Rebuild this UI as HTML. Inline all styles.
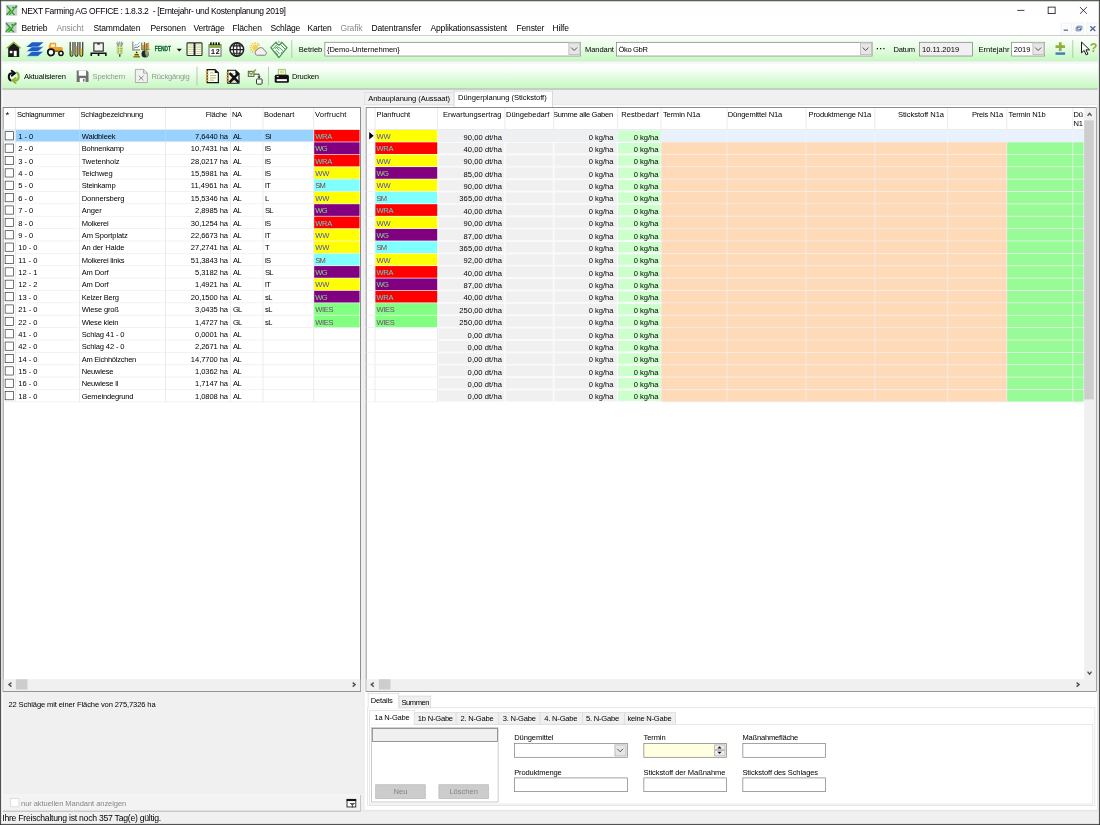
<!DOCTYPE html>
<html lang="de"><head><meta charset="utf-8"><title>NEXT Farming AG OFFICE</title>
<style>
html,body{margin:0;padding:0;background:#f0f0f0;overflow:hidden;width:1100px;height:825px}
#app{position:absolute;left:0;top:0;width:1600px;height:1200px;transform:scale(0.6875);transform-origin:0 0;background:#f0f0f0;overflow:hidden;font-family:"Liberation Sans",sans-serif;font-size:11px;color:#000}
#app div{position:absolute;box-sizing:border-box;white-space:nowrap}
#app .t{height:16px;line-height:16px;margin-top:-8px}
#app .r{text-align:right}
#app .s{font-size:12px}
#app .g{color:#8a8a8a}
#app svg{position:absolute;overflow:visible}
</style></head><body>
<div id="app">
<div style="left:0;top:0;width:1600px;height:1200px;background:#262626"></div><div style="left:1px;top:1px;width:1598px;height:1198px;background:#b4b4b4"></div><div style="left:2px;top:2px;width:1596px;height:1196px;background:#fff"></div><div style="left:0;top:0;width:1600px;height:1px;background:#1a3017"></div><div style="left:1px;top:1px;width:1598px;height:1px;background:#b4beb4"></div>
<div style="left:3.78px;top:52.36px;width:1593.02px;height:1144.29px;background:#f0f0f0"></div>
<div class="t s" style="left:30.98px;top:15.85px;font-size:12.4px;letter-spacing:-.45px">NEXT Farming AG OFFICE : 1.8.3.2&nbsp; - [Erntejahr- und Kostenplanung 2019]</div>
<div class="t s" style="left:31.13px;top:40.73px;font-size:12.4px;letter-spacing:-.2px;">Betrieb</div>
<div class="t s" style="left:82.04px;top:40.73px;font-size:12.4px;letter-spacing:-.2px;color:#8a8a8a">Ansicht</div>
<div class="t s" style="left:135.85px;top:40.73px;font-size:12.4px;letter-spacing:-.2px;">Stammdaten</div>
<div class="t s" style="left:218.76px;top:40.73px;font-size:12.4px;letter-spacing:-.2px;">Personen</div>
<div class="t s" style="left:281.31px;top:40.73px;font-size:12.4px;letter-spacing:-.2px;">Verträge</div>
<div class="t s" style="left:338.04px;top:40.73px;font-size:12.4px;letter-spacing:-.2px;">Flächen</div>
<div class="t s" style="left:393.31px;top:40.73px;font-size:12.4px;letter-spacing:-.2px;">Schläge</div>
<div class="t s" style="left:447.13px;top:40.73px;font-size:12.4px;letter-spacing:-.2px;">Karten</div>
<div class="t s" style="left:495.13px;top:40.73px;font-size:12.4px;letter-spacing:-.2px;color:#8a8a8a">Grafik</div>
<div class="t s" style="left:540.22px;top:40.73px;font-size:12.4px;letter-spacing:-.2px;">Datentransfer</div>
<div class="t s" style="left:626.04px;top:40.73px;font-size:12.4px;letter-spacing:-.2px;">Applikationsassistent</div>
<div class="t s" style="left:751.13px;top:40.73px;font-size:12.4px;letter-spacing:-.2px;">Fenster</div>
<div class="t s" style="left:803.49px;top:40.73px;font-size:12.4px;letter-spacing:-.2px;">Hilfe</div>
<div style="left:3.35px;top:51.2px;width:1593.6px;height:1.02px;background:#a0a0a0"></div>
<div style="left:3.35px;top:52.36px;width:1593.6px;height:36.8px;background:linear-gradient(#fcfffc,#eefdec 35%,#d8fad4 70%,#c4f8bf)"></div>
<div style="left:4px;top:89px;width:1593px;height:1px;background:#b6ceb6"></div>
<div style="left:3.35px;top:89.16px;width:1593.6px;height:3.49px;background:linear-gradient(#f4f4f6,#f6f8f8)"></div>
<div style="left:3.35px;top:92.65px;width:1593.6px;height:36.8px;background:linear-gradient(#ffffff,#f3fef2 30%,#dcfbd8 65%,#c4f8bf)"></div>
<div style="left:3.35px;top:129.31px;width:1593.6px;height:1.16px;background:#8c8c8c"></div>
<div style="left:4px;top:156px;width:521px;height:850px;background:#5c5c5c"></div>
<div style="left:5px;top:157px;width:519px;height:848px;background:#fff"></div>
<div style="left:22px;top:157px;width:1px;height:428px;background:#e2e2e2"></div>
<div style="left:115px;top:157px;width:1px;height:428px;background:#e2e2e2"></div>
<div style="left:240px;top:157px;width:1px;height:428px;background:#e2e2e2"></div>
<div style="left:335px;top:157px;width:1px;height:428px;background:#e2e2e2"></div>
<div style="left:382px;top:157px;width:1px;height:428px;background:#e2e2e2"></div>
<div style="left:456px;top:157px;width:1px;height:428px;background:#e2e2e2"></div>
<div style="left:5px;top:188px;width:519px;height:1px;background:#e2e2e2"></div>
<div class="t" style="left:8.15px;top:165.82px;font-size:14px">*</div>
<div class="t" style="left:24.73px;top:165.96px;letter-spacing:-0.414px;">Schlagnummer</div>
<div class="t" style="left:117.09px;top:165.96px;letter-spacing:-0.295px;">Schlagbezeichnung</div>
<div class="t r" style="right:1269.82px;top:165.96px;letter-spacing:-0.336px;">Fläche</div>
<div class="t" style="left:337.45px;top:165.96px;letter-spacing:-0.641px;">NA</div>
<div class="t" style="left:384px;top:165.96px;letter-spacing:-0.080px;">Bodenart</div>
<div class="t" style="left:458.18px;top:165.96px;letter-spacing:0.220px;">Vorfrucht</div>
<div style="left:5px;top:189px;width:17px;height:17px;background:#e4f1fc"></div>
<div style="left:23px;top:189px;width:433px;height:17px;background:#99d1ff"></div>
<div style="left:115px;top:189px;width:1px;height:17px;background:#b4dcfc"></div>
<div style="left:240px;top:189px;width:1px;height:17px;background:#b4dcfc"></div>
<div style="left:335px;top:189px;width:1px;height:17px;background:#b4dcfc"></div>
<div style="left:382px;top:189px;width:1px;height:17px;background:#b4dcfc"></div>
<div style="left:5px;top:206px;width:519px;height:1px;background:#ececec"></div>
<div style="left:7px;top:191px;width:13px;height:13px;background:#fff;border:1px solid #333"></div>
<div class="t" style="left:26.47px;top:198.31px;letter-spacing:-0.002px;">1 - 0</div>
<div class="t" style="left:118.84px;top:198.31px;letter-spacing:-0.216px;">Waldbleek</div>
<div class="t r" style="right:1268.36px;top:198.31px;letter-spacing:-0.104px;">7,6440 ha</div>
<div class="t" style="left:338.91px;top:198.31px;letter-spacing:-0.727px;">AL</div>
<div class="t" style="left:385.45px;top:198.31px;letter-spacing:-0.891px;">Sl</div>
<div style="left:457px;top:189px;width:66px;height:17px;background:#ff0000"></div>
<div class="t" style="left:458.62px;top:198.31px;letter-spacing:-0.555px;opacity:.85;color:#3ff">WRA</div>
<div style="left:5px;top:224px;width:519px;height:1px;background:#ececec"></div>
<div style="left:7px;top:209px;width:13px;height:13px;background:#fff;border:1px solid #333"></div>
<div class="t" style="left:26.47px;top:216.31px;letter-spacing:-0.002px;">2 - 0</div>
<div class="t" style="left:118.84px;top:216.31px;letter-spacing:-0.382px;">Bohnenkamp</div>
<div class="t r" style="right:1268.36px;top:216.31px;letter-spacing:-0.105px;">10,7431 ha</div>
<div class="t" style="left:338.91px;top:216.31px;letter-spacing:-0.727px;">AL</div>
<div class="t" style="left:385.45px;top:216.31px;letter-spacing:-0.891px;">lS</div>
<div style="left:457px;top:207px;width:66px;height:17px;background:#800080"></div>
<div class="t" style="left:458.62px;top:216.31px;letter-spacing:-0.970px;opacity:.85;color:#8f8">WG</div>
<div style="left:5px;top:242px;width:519px;height:1px;background:#ececec"></div>
<div style="left:7px;top:227px;width:13px;height:13px;background:#fff;border:1px solid #333"></div>
<div class="t" style="left:26.47px;top:234.31px;letter-spacing:-0.002px;">3 - 0</div>
<div class="t" style="left:118.84px;top:234.31px;letter-spacing:-0.064px;">Twetenholz</div>
<div class="t r" style="right:1268.36px;top:234.31px;letter-spacing:-0.105px;">28,0217 ha</div>
<div class="t" style="left:338.91px;top:234.31px;letter-spacing:-0.727px;">AL</div>
<div class="t" style="left:385.45px;top:234.31px;letter-spacing:-0.891px;">lS</div>
<div style="left:457px;top:225px;width:66px;height:17px;background:#ff0000"></div>
<div class="t" style="left:458.62px;top:234.31px;letter-spacing:-0.555px;opacity:.85;color:#3ff">WRA</div>
<div style="left:5px;top:260px;width:519px;height:1px;background:#ececec"></div>
<div style="left:7px;top:245px;width:13px;height:13px;background:#fff;border:1px solid #333"></div>
<div class="t" style="left:26.47px;top:252.31px;letter-spacing:-0.002px;">4 - 0</div>
<div class="t" style="left:118.84px;top:252.31px;letter-spacing:-0.107px;">Teichweg</div>
<div class="t r" style="right:1268.36px;top:252.31px;letter-spacing:-0.105px;">15,5981 ha</div>
<div class="t" style="left:338.91px;top:252.31px;letter-spacing:-0.727px;">AL</div>
<div class="t" style="left:385.45px;top:252.31px;letter-spacing:-0.891px;">lS</div>
<div style="left:457px;top:243px;width:66px;height:17px;background:#ffff00"></div>
<div class="t" style="left:458.62px;top:252.31px;letter-spacing:-0.383px;opacity:.85;color:#22f">WW</div>
<div style="left:5px;top:278px;width:519px;height:1px;background:#ececec"></div>
<div style="left:7px;top:263px;width:13px;height:13px;background:#fff;border:1px solid #333"></div>
<div class="t" style="left:26.47px;top:270.31px;letter-spacing:-0.002px;">5 - 0</div>
<div class="t" style="left:118.84px;top:270.31px;letter-spacing:-0.330px;">Steinkamp</div>
<div class="t r" style="right:1268.36px;top:270.31px;letter-spacing:-0.023px;">11,4961 ha</div>
<div class="t" style="left:338.91px;top:270.31px;letter-spacing:-0.727px;">AL</div>
<div class="t" style="left:385.45px;top:270.31px;letter-spacing:-0.581px;">lT</div>
<div style="left:457px;top:261px;width:66px;height:17px;background:#80ffff"></div>
<div class="t" style="left:458.62px;top:270.31px;letter-spacing:-1.250px;opacity:.85;color:#811">SM</div>
<div style="left:5px;top:296px;width:519px;height:1px;background:#ececec"></div>
<div style="left:7px;top:281px;width:13px;height:13px;background:#fff;border:1px solid #333"></div>
<div class="t" style="left:26.47px;top:288.31px;letter-spacing:-0.002px;">6 - 0</div>
<div class="t" style="left:118.84px;top:288.31px;letter-spacing:-0.144px;">Donnersberg</div>
<div class="t r" style="right:1268.36px;top:288.31px;letter-spacing:-0.105px;">15,5346 ha</div>
<div class="t" style="left:338.91px;top:288.31px;letter-spacing:-0.727px;">AL</div>
<div class="t" style="left:385.45px;top:288.31px;">L</div>
<div style="left:457px;top:279px;width:66px;height:17px;background:#ffff00"></div>
<div class="t" style="left:458.62px;top:288.31px;letter-spacing:-0.383px;opacity:.85;color:#22f">WW</div>
<div style="left:5px;top:314px;width:519px;height:1px;background:#ececec"></div>
<div style="left:7px;top:299px;width:13px;height:13px;background:#fff;border:1px solid #333"></div>
<div class="t" style="left:26.47px;top:306.31px;letter-spacing:-0.002px;">7 - 0</div>
<div class="t" style="left:118.84px;top:306.31px;letter-spacing:-0.070px;">Anger</div>
<div class="t r" style="right:1268.36px;top:306.31px;letter-spacing:-0.104px;">2,8985 ha</div>
<div class="t" style="left:338.91px;top:306.31px;letter-spacing:-0.727px;">AL</div>
<div class="t" style="left:385.45px;top:306.31px;letter-spacing:-1.227px;">SL</div>
<div style="left:457px;top:297px;width:66px;height:17px;background:#800080"></div>
<div class="t" style="left:458.62px;top:306.31px;letter-spacing:-0.970px;opacity:.85;color:#8f8">WG</div>
<div style="left:5px;top:332px;width:519px;height:1px;background:#ececec"></div>
<div style="left:7px;top:317px;width:13px;height:13px;background:#fff;border:1px solid #333"></div>
<div class="t" style="left:26.47px;top:324.31px;letter-spacing:-0.002px;">8 - 0</div>
<div class="t" style="left:118.84px;top:324.31px;letter-spacing:-0.321px;">Molkerei</div>
<div class="t r" style="right:1268.36px;top:324.31px;letter-spacing:-0.105px;">30,1254 ha</div>
<div class="t" style="left:338.91px;top:324.31px;letter-spacing:-0.727px;">AL</div>
<div class="t" style="left:385.45px;top:324.31px;letter-spacing:-0.891px;">lS</div>
<div style="left:457px;top:315px;width:66px;height:17px;background:#ff0000"></div>
<div class="t" style="left:458.62px;top:324.31px;letter-spacing:-0.555px;opacity:.85;color:#3ff">WRA</div>
<div style="left:5px;top:350px;width:519px;height:1px;background:#ececec"></div>
<div style="left:7px;top:335px;width:13px;height:13px;background:#fff;border:1px solid #333"></div>
<div class="t" style="left:26.47px;top:342.31px;letter-spacing:-0.002px;">9 - 0</div>
<div class="t" style="left:118.84px;top:342.31px;letter-spacing:-0.160px;">Am Sportplatz</div>
<div class="t r" style="right:1268.36px;top:342.31px;letter-spacing:-0.105px;">22,6673 ha</div>
<div class="t" style="left:338.91px;top:342.31px;letter-spacing:-0.727px;">AL</div>
<div class="t" style="left:385.45px;top:342.31px;letter-spacing:-0.581px;">lT</div>
<div style="left:457px;top:333px;width:66px;height:17px;background:#ffff00"></div>
<div class="t" style="left:458.62px;top:342.31px;letter-spacing:-0.383px;opacity:.85;color:#22f">WW</div>
<div style="left:5px;top:368px;width:519px;height:1px;background:#ececec"></div>
<div style="left:7px;top:353px;width:13px;height:13px;background:#fff;border:1px solid #333"></div>
<div class="t" style="left:26.47px;top:360.31px;letter-spacing:-0.021px;">10 - 0</div>
<div class="t" style="left:118.84px;top:360.31px;letter-spacing:-0.184px;">An der Halde</div>
<div class="t r" style="right:1268.36px;top:360.31px;letter-spacing:-0.105px;">27,2741 ha</div>
<div class="t" style="left:338.91px;top:360.31px;letter-spacing:-0.727px;">AL</div>
<div class="t" style="left:385.45px;top:360.31px;">T</div>
<div style="left:457px;top:351px;width:66px;height:17px;background:#ffff00"></div>
<div class="t" style="left:458.62px;top:360.31px;letter-spacing:-0.383px;opacity:.85;color:#22f">WW</div>
<div style="left:5px;top:386px;width:519px;height:1px;background:#ececec"></div>
<div style="left:7px;top:371px;width:13px;height:13px;background:#fff;border:1px solid #333"></div>
<div class="t" style="left:26.47px;top:378.31px;letter-spacing:0.115px;">11 - 0</div>
<div class="t" style="left:118.84px;top:378.31px;letter-spacing:-0.330px;">Molkerei links</div>
<div class="t r" style="right:1268.36px;top:378.31px;letter-spacing:-0.105px;">51,3843 ha</div>
<div class="t" style="left:338.91px;top:378.31px;letter-spacing:-0.727px;">AL</div>
<div class="t" style="left:385.45px;top:378.31px;letter-spacing:-0.891px;">lS</div>
<div style="left:457px;top:369px;width:66px;height:17px;background:#80ffff"></div>
<div class="t" style="left:458.62px;top:378.31px;letter-spacing:-1.250px;opacity:.85;color:#811">SM</div>
<div style="left:5px;top:404px;width:519px;height:1px;background:#ececec"></div>
<div style="left:7px;top:389px;width:13px;height:13px;background:#fff;border:1px solid #333"></div>
<div class="t" style="left:26.47px;top:396.31px;letter-spacing:-0.021px;">12 - 1</div>
<div class="t" style="left:118.84px;top:396.31px;letter-spacing:-0.191px;">Am Dorf</div>
<div class="t r" style="right:1268.36px;top:396.31px;letter-spacing:-0.104px;">5,3182 ha</div>
<div class="t" style="left:338.91px;top:396.31px;letter-spacing:-0.727px;">AL</div>
<div class="t" style="left:385.45px;top:396.31px;letter-spacing:-1.227px;">SL</div>
<div style="left:457px;top:387px;width:66px;height:17px;background:#800080"></div>
<div class="t" style="left:458.62px;top:396.31px;letter-spacing:-0.970px;opacity:.85;color:#8f8">WG</div>
<div style="left:5px;top:422px;width:519px;height:1px;background:#ececec"></div>
<div style="left:7px;top:407px;width:13px;height:13px;background:#fff;border:1px solid #333"></div>
<div class="t" style="left:26.47px;top:414.31px;letter-spacing:-0.021px;">12 - 2</div>
<div class="t" style="left:118.84px;top:414.31px;letter-spacing:-0.191px;">Am Dorf</div>
<div class="t r" style="right:1268.36px;top:414.31px;letter-spacing:-0.104px;">1,4921 ha</div>
<div class="t" style="left:338.91px;top:414.31px;letter-spacing:-0.727px;">AL</div>
<div class="t" style="left:385.45px;top:414.31px;letter-spacing:-0.581px;">lT</div>
<div style="left:457px;top:405px;width:66px;height:17px;background:#ffff00"></div>
<div class="t" style="left:458.62px;top:414.31px;letter-spacing:-0.383px;opacity:.85;color:#22f">WW</div>
<div style="left:5px;top:440px;width:519px;height:1px;background:#ececec"></div>
<div style="left:7px;top:425px;width:13px;height:13px;background:#fff;border:1px solid #333"></div>
<div class="t" style="left:26.47px;top:432.31px;letter-spacing:-0.021px;">13 - 0</div>
<div class="t" style="left:118.84px;top:432.31px;letter-spacing:-0.315px;">Kelzer Berg</div>
<div class="t r" style="right:1268.36px;top:432.31px;letter-spacing:-0.105px;">20,1500 ha</div>
<div class="t" style="left:338.91px;top:432.31px;letter-spacing:-0.727px;">AL</div>
<div class="t" style="left:385.45px;top:432.31px;letter-spacing:-0.809px;">sL</div>
<div style="left:457px;top:423px;width:66px;height:17px;background:#800080"></div>
<div class="t" style="left:458.62px;top:432.31px;letter-spacing:-0.970px;opacity:.85;color:#8f8">WG</div>
<div style="left:5px;top:458px;width:519px;height:1px;background:#ececec"></div>
<div style="left:7px;top:443px;width:13px;height:13px;background:#fff;border:1px solid #333"></div>
<div class="t" style="left:26.47px;top:450.31px;letter-spacing:-0.021px;">21 - 0</div>
<div class="t" style="left:118.84px;top:450.31px;letter-spacing:-0.223px;">Wiese groß</div>
<div class="t r" style="right:1268.36px;top:450.31px;letter-spacing:-0.104px;">3,0435 ha</div>
<div class="t" style="left:338.91px;top:450.31px;letter-spacing:-1.337px;">GL</div>
<div class="t" style="left:385.45px;top:450.31px;letter-spacing:-0.809px;">sL</div>
<div style="left:457px;top:441px;width:66px;height:17px;background:#80ff80"></div>
<div class="t" style="left:458.62px;top:450.31px;letter-spacing:-0.529px;opacity:.85;color:#781878">WIES</div>
<div style="left:5px;top:476px;width:519px;height:1px;background:#ececec"></div>
<div style="left:7px;top:461px;width:13px;height:13px;background:#fff;border:1px solid #333"></div>
<div class="t" style="left:26.47px;top:468.31px;letter-spacing:-0.021px;">22 - 0</div>
<div class="t" style="left:118.84px;top:468.31px;letter-spacing:-0.294px;">Wiese klein</div>
<div class="t r" style="right:1268.36px;top:468.31px;letter-spacing:-0.104px;">1,4727 ha</div>
<div class="t" style="left:338.91px;top:468.31px;letter-spacing:-1.337px;">GL</div>
<div class="t" style="left:385.45px;top:468.31px;letter-spacing:-0.809px;">sL</div>
<div style="left:457px;top:459px;width:66px;height:17px;background:#80ff80"></div>
<div class="t" style="left:458.62px;top:468.31px;letter-spacing:-0.529px;opacity:.85;color:#781878">WIES</div>
<div style="left:5px;top:494px;width:519px;height:1px;background:#ececec"></div>
<div style="left:7px;top:479px;width:13px;height:13px;background:#fff;border:1px solid #333"></div>
<div class="t" style="left:26.47px;top:486.31px;letter-spacing:-0.021px;">41 - 0</div>
<div class="t" style="left:118.84px;top:486.31px;letter-spacing:-0.217px;">Schlag 41 - 0</div>
<div class="t r" style="right:1268.36px;top:486.31px;letter-spacing:-0.104px;">0,0001 ha</div>
<div class="t" style="left:338.91px;top:486.31px;letter-spacing:-0.727px;">AL</div>
<div class="t" style="left:385.45px;top:486.31px;"></div>
<div style="left:5px;top:512px;width:519px;height:1px;background:#ececec"></div>
<div style="left:7px;top:497px;width:13px;height:13px;background:#fff;border:1px solid #333"></div>
<div class="t" style="left:26.47px;top:504.31px;letter-spacing:-0.021px;">42 - 0</div>
<div class="t" style="left:118.84px;top:504.31px;letter-spacing:-0.217px;">Schlag 42 - 0</div>
<div class="t r" style="right:1268.36px;top:504.31px;letter-spacing:-0.104px;">2,2671 ha</div>
<div class="t" style="left:338.91px;top:504.31px;letter-spacing:-0.727px;">AL</div>
<div class="t" style="left:385.45px;top:504.31px;"></div>
<div style="left:5px;top:530px;width:519px;height:1px;background:#ececec"></div>
<div style="left:7px;top:515px;width:13px;height:13px;background:#fff;border:1px solid #333"></div>
<div class="t" style="left:26.47px;top:522.31px;letter-spacing:-0.021px;">14 - 0</div>
<div class="t" style="left:118.84px;top:522.31px;letter-spacing:-0.399px;">Am Eichhölzchen</div>
<div class="t r" style="right:1268.36px;top:522.31px;letter-spacing:-0.105px;">14,7700 ha</div>
<div class="t" style="left:338.91px;top:522.31px;letter-spacing:-0.727px;">AL</div>
<div class="t" style="left:385.45px;top:522.31px;"></div>
<div style="left:5px;top:548px;width:519px;height:1px;background:#ececec"></div>
<div style="left:7px;top:533px;width:13px;height:13px;background:#fff;border:1px solid #333"></div>
<div class="t" style="left:26.47px;top:540.31px;letter-spacing:-0.021px;">15 - 0</div>
<div class="t" style="left:118.84px;top:540.31px;letter-spacing:-0.287px;">Neuwiese</div>
<div class="t r" style="right:1268.36px;top:540.31px;letter-spacing:-0.104px;">1,0362 ha</div>
<div class="t" style="left:338.91px;top:540.31px;letter-spacing:-0.727px;">AL</div>
<div class="t" style="left:385.45px;top:540.31px;"></div>
<div style="left:5px;top:566px;width:519px;height:1px;background:#ececec"></div>
<div style="left:7px;top:551px;width:13px;height:13px;background:#fff;border:1px solid #333"></div>
<div class="t" style="left:26.47px;top:558.31px;letter-spacing:-0.021px;">16 - 0</div>
<div class="t" style="left:118.84px;top:558.31px;letter-spacing:-0.295px;">Neuwiese ll</div>
<div class="t r" style="right:1268.36px;top:558.31px;letter-spacing:-0.104px;">1,7147 ha</div>
<div class="t" style="left:338.91px;top:558.31px;letter-spacing:-0.727px;">AL</div>
<div class="t" style="left:385.45px;top:558.31px;"></div>
<div style="left:5px;top:584px;width:519px;height:1px;background:#ececec"></div>
<div style="left:7px;top:569px;width:13px;height:13px;background:#fff;border:1px solid #333"></div>
<div class="t" style="left:26.47px;top:576.31px;letter-spacing:-0.021px;">18 - 0</div>
<div class="t" style="left:118.84px;top:576.31px;letter-spacing:-0.298px;">Gemeindegrund</div>
<div class="t r" style="right:1268.36px;top:576.31px;letter-spacing:-0.104px;">1,0808 ha</div>
<div class="t" style="left:338.91px;top:576.31px;letter-spacing:-0.727px;">AL</div>
<div class="t" style="left:385.45px;top:576.31px;"></div>
<div style="left:5px;top:988px;width:519px;height:17px;background:#f0f0f0"></div>
<div style="left:23px;top:988px;width:17px;height:15px;background:#cdcdcd"></div>
<div class="t" style="left:12.22px;top:1025.02px;letter-spacing:-0.171px;">22 Schläge mit einer Fläche von 275,7326 ha</div>
<div style="left:4px;top:1156px;width:521px;height:23px;background:#f3f3f3;border-right:1px solid #b0b0b0;border-top:1px solid #fafafa"></div>
<div style="left:4px;top:1179px;width:521px;height:2px;background:#c6c6c6"></div>
<div style="left:14.98px;top:1161.02px;width:12.8px;height:12.51px;background:#fff;border:1.2px solid #cfcfcf;border-radius:1px"></div>
<div class="t" style="left:30.55px;top:1168px;letter-spacing:-0.118px;color:#86868f">nur aktuellen Mandant anzeigen</div>
<div style="left:525.09px;top:1178.62px;width:1071.56px;height:1.89px;background:#dedede"></div>
<div class="t s" style="left:3.35px;top:1189.96px;font-size:12.6px;letter-spacing:-.38px">Ihre Freischaltung ist noch 357 Tag(e) gültig.</div>
<div style="left:528.87px;top:152.15px;width:1067.78px;height:1026.91px;background:#fff;border:1px solid #dcdcdc"></div>
<div style="left:529.75px;top:134.4px;width:130.91px;height:18.33px;background:#f0f0f0;border:1px solid #d9d9d9"></div>
<div class="t" style="left:535.56px;top:143.27px;letter-spacing:-0.095px;">Anbauplanung (Aussaat)</div>
<div style="left:660.07px;top:132.36px;width:143.71px;height:23.27px;background:#fff;border:1px solid #c9c9c9;border-bottom:none"></div>
<div class="t" style="left:666.18px;top:141.53px;letter-spacing:-0.040px;">Düngerplanung (Stickstoff)</div>
<div style="left:532px;top:156px;width:1063px;height:850px;background:#5c5c5c"></div>
<div style="left:533px;top:157px;width:1061px;height:848px;background:#fff"></div>
<div style="left:545px;top:157px;width:1px;height:31px;background:#e2e2e2"></div>
<div style="left:636px;top:157px;width:1px;height:31px;background:#e2e2e2"></div>
<div style="left:734px;top:157px;width:1px;height:31px;background:#e2e2e2"></div>
<div style="left:805px;top:157px;width:1px;height:31px;background:#e2e2e2"></div>
<div style="left:898px;top:157px;width:1px;height:31px;background:#e2e2e2"></div>
<div style="left:961px;top:157px;width:1px;height:31px;background:#e2e2e2"></div>
<div style="left:1057px;top:157px;width:1px;height:31px;background:#e2e2e2"></div>
<div style="left:1172px;top:157px;width:1px;height:31px;background:#e2e2e2"></div>
<div style="left:1272px;top:157px;width:1px;height:31px;background:#e2e2e2"></div>
<div style="left:1378px;top:157px;width:1px;height:31px;background:#e2e2e2"></div>
<div style="left:1464px;top:157px;width:1px;height:31px;background:#e2e2e2"></div>
<div style="left:1560px;top:157px;width:1px;height:31px;background:#e2e2e2"></div>
<div style="left:533px;top:188px;width:1044px;height:1px;background:#e2e2e2"></div>
<div class="t" style="left:547.64px;top:165.96px;letter-spacing:-0.052px;">Planfrucht</div>
<div class="t" style="left:644.36px;top:165.96px;letter-spacing:0.040px;">Erwartungsertrag</div>
<div class="t" style="left:736px;top:165.96px;letter-spacing:-0.055px;">Düngebedarf</div>
<div style="left:805.96px;top:157.09px;width:91.64px;height:29.09px;overflow:hidden"><div class="t r" style="right:6.25px;top:8.87px;letter-spacing:-0.447px;">Summe alle Gaben</div></div>
<div class="t r" style="right:642.18px;top:165.96px;letter-spacing:0.020px;">Restbedarf</div>
<div class="t" style="left:964.36px;top:165.96px;letter-spacing:-0.224px;">Termin N1a</div>
<div style="left:1057.89px;top:157.09px;width:113.45px;height:29.09px;overflow:hidden"><div class="t" style="left:0.73px;top:8.87px;letter-spacing:-0.195px;">Düngemittel N1a</div></div>
<div class="t" style="left:1176.15px;top:165.96px;letter-spacing:-0.236px;">Produktmenge N1a</div>
<div class="t r" style="right:226.91px;top:165.96px;letter-spacing:-0.047px;">Stickstoff N1a</div>
<div class="t r" style="right:141.09px;top:165.96px;letter-spacing:-0.366px;">Preis N1a</div>
<div class="t" style="left:1466.91px;top:165.96px;letter-spacing:-0.224px;">Termin N1b</div>
<div class="t" style="left:1561.6px;top:165.53px;letter-spacing:-0.530px;">Dü</div>
<div class="t" style="left:1561.6px;top:179.05px;letter-spacing:-0.530px;">N1</div>
<div style="left:533px;top:206px;width:12px;height:1px;background:#ececec"></div>
<div style="left:545px;top:189px;width:1px;height:18px;background:#e2e2e2"></div>
<div style="left:637px;top:189px;width:940px;height:18px;background:#e9f1fd"></div>
<div style="left:546px;top:189px;width:90px;height:17px;background:#ffff00"></div>
<div class="t" style="left:547.78px;top:198.31px;letter-spacing:-0.383px;opacity:.85;color:#22f">WW</div>
<div style="left:638px;top:190px;width:95px;height:15px;background:#f0f0f0"></div>
<div style="left:736px;top:190px;width:68px;height:15px;background:#f0f0f0"></div>
<div style="left:807px;top:190px;width:90px;height:15px;background:#f0f0f0"></div>
<div style="left:899px;top:190px;width:62px;height:15px;background:#ccffcc"></div>
<div style="left:1057px;top:189px;width:1px;height:18px;background:#f2f6fd"></div>
<div style="left:1172px;top:189px;width:1px;height:18px;background:#f2f6fd"></div>
<div style="left:1272px;top:189px;width:1px;height:18px;background:#f2f6fd"></div>
<div style="left:1378px;top:189px;width:1px;height:18px;background:#f2f6fd"></div>
<div style="left:1464px;top:189px;width:1px;height:18px;background:#f2f6fd"></div>
<div style="left:1560px;top:189px;width:1px;height:18px;background:#f2f6fd"></div>
<div class="t r" style="right:869.82px;top:199.18px;letter-spacing:0.087px;">90,00 dt/ha</div>
<div class="t r" style="right:707.64px;top:199.18px;letter-spacing:-0.012px;">0 kg/ha</div>
<div class="t r" style="right:642.18px;top:199.18px;letter-spacing:-0.012px;">0 kg/ha</div>
<div style="left:533px;top:224px;width:12px;height:1px;background:#ececec"></div>
<div style="left:545px;top:207px;width:1px;height:18px;background:#e2e2e2"></div>
<div style="left:637px;top:207px;width:940px;height:18px;background:#f9f9f9"></div>
<div style="left:962px;top:207px;width:615px;height:18px;background:#f0f0f0"></div>
<div style="left:546px;top:207px;width:90px;height:17px;background:#ff0000"></div>
<div class="t" style="left:547.78px;top:216.31px;letter-spacing:-0.555px;opacity:.85;color:#3ff">WRA</div>
<div style="left:638px;top:208px;width:95px;height:15px;background:#f0f0f0"></div>
<div style="left:736px;top:208px;width:68px;height:15px;background:#f0f0f0"></div>
<div style="left:807px;top:208px;width:90px;height:15px;background:#f0f0f0"></div>
<div style="left:899px;top:208px;width:62px;height:15px;background:#ccffcc"></div>
<div style="left:962px;top:207px;width:95px;height:17px;background:#ffdab9"></div>
<div style="left:1058px;top:207px;width:114px;height:17px;background:#ffdab9"></div>
<div style="left:1173px;top:207px;width:99px;height:17px;background:#ffdab9"></div>
<div style="left:1273px;top:207px;width:105px;height:17px;background:#ffdab9"></div>
<div style="left:1379px;top:207px;width:85px;height:17px;background:#ffdab9"></div>
<div style="left:1465px;top:207px;width:95px;height:17px;background:#98fb98"></div>
<div style="left:1561px;top:207px;width:15px;height:17px;background:#98fb98"></div>
<div class="t r" style="right:869.82px;top:217.18px;letter-spacing:0.087px;">40,00 dt/ha</div>
<div class="t r" style="right:707.64px;top:217.18px;letter-spacing:-0.012px;">0 kg/ha</div>
<div class="t r" style="right:642.18px;top:217.18px;letter-spacing:-0.012px;">0 kg/ha</div>
<div style="left:533px;top:242px;width:12px;height:1px;background:#ececec"></div>
<div style="left:545px;top:225px;width:1px;height:18px;background:#e2e2e2"></div>
<div style="left:637px;top:225px;width:940px;height:18px;background:#f9f9f9"></div>
<div style="left:962px;top:225px;width:615px;height:18px;background:#f0f0f0"></div>
<div style="left:546px;top:225px;width:90px;height:17px;background:#ffff00"></div>
<div class="t" style="left:547.78px;top:234.31px;letter-spacing:-0.383px;opacity:.85;color:#22f">WW</div>
<div style="left:638px;top:226px;width:95px;height:15px;background:#f0f0f0"></div>
<div style="left:736px;top:226px;width:68px;height:15px;background:#f0f0f0"></div>
<div style="left:807px;top:226px;width:90px;height:15px;background:#f0f0f0"></div>
<div style="left:899px;top:226px;width:62px;height:15px;background:#ccffcc"></div>
<div style="left:962px;top:225px;width:95px;height:17px;background:#ffdab9"></div>
<div style="left:1058px;top:225px;width:114px;height:17px;background:#ffdab9"></div>
<div style="left:1173px;top:225px;width:99px;height:17px;background:#ffdab9"></div>
<div style="left:1273px;top:225px;width:105px;height:17px;background:#ffdab9"></div>
<div style="left:1379px;top:225px;width:85px;height:17px;background:#ffdab9"></div>
<div style="left:1465px;top:225px;width:95px;height:17px;background:#98fb98"></div>
<div style="left:1561px;top:225px;width:15px;height:17px;background:#98fb98"></div>
<div class="t r" style="right:869.82px;top:235.18px;letter-spacing:0.087px;">90,00 dt/ha</div>
<div class="t r" style="right:707.64px;top:235.18px;letter-spacing:-0.012px;">0 kg/ha</div>
<div class="t r" style="right:642.18px;top:235.18px;letter-spacing:-0.012px;">0 kg/ha</div>
<div style="left:533px;top:260px;width:12px;height:1px;background:#ececec"></div>
<div style="left:545px;top:243px;width:1px;height:18px;background:#e2e2e2"></div>
<div style="left:637px;top:243px;width:940px;height:18px;background:#f9f9f9"></div>
<div style="left:962px;top:243px;width:615px;height:18px;background:#f0f0f0"></div>
<div style="left:546px;top:243px;width:90px;height:17px;background:#800080"></div>
<div class="t" style="left:547.78px;top:252.31px;letter-spacing:-0.970px;opacity:.85;color:#8f8">WG</div>
<div style="left:638px;top:244px;width:95px;height:15px;background:#f0f0f0"></div>
<div style="left:736px;top:244px;width:68px;height:15px;background:#f0f0f0"></div>
<div style="left:807px;top:244px;width:90px;height:15px;background:#f0f0f0"></div>
<div style="left:899px;top:244px;width:62px;height:15px;background:#ccffcc"></div>
<div style="left:962px;top:243px;width:95px;height:17px;background:#ffdab9"></div>
<div style="left:1058px;top:243px;width:114px;height:17px;background:#ffdab9"></div>
<div style="left:1173px;top:243px;width:99px;height:17px;background:#ffdab9"></div>
<div style="left:1273px;top:243px;width:105px;height:17px;background:#ffdab9"></div>
<div style="left:1379px;top:243px;width:85px;height:17px;background:#ffdab9"></div>
<div style="left:1465px;top:243px;width:95px;height:17px;background:#98fb98"></div>
<div style="left:1561px;top:243px;width:15px;height:17px;background:#98fb98"></div>
<div class="t r" style="right:869.82px;top:253.18px;letter-spacing:0.087px;">85,00 dt/ha</div>
<div class="t r" style="right:707.64px;top:253.18px;letter-spacing:-0.012px;">0 kg/ha</div>
<div class="t r" style="right:642.18px;top:253.18px;letter-spacing:-0.012px;">0 kg/ha</div>
<div style="left:533px;top:278px;width:12px;height:1px;background:#ececec"></div>
<div style="left:545px;top:261px;width:1px;height:18px;background:#e2e2e2"></div>
<div style="left:637px;top:261px;width:940px;height:18px;background:#f9f9f9"></div>
<div style="left:962px;top:261px;width:615px;height:18px;background:#f0f0f0"></div>
<div style="left:546px;top:261px;width:90px;height:17px;background:#ffff00"></div>
<div class="t" style="left:547.78px;top:270.31px;letter-spacing:-0.383px;opacity:.85;color:#22f">WW</div>
<div style="left:638px;top:262px;width:95px;height:15px;background:#f0f0f0"></div>
<div style="left:736px;top:262px;width:68px;height:15px;background:#f0f0f0"></div>
<div style="left:807px;top:262px;width:90px;height:15px;background:#f0f0f0"></div>
<div style="left:899px;top:262px;width:62px;height:15px;background:#ccffcc"></div>
<div style="left:962px;top:261px;width:95px;height:17px;background:#ffdab9"></div>
<div style="left:1058px;top:261px;width:114px;height:17px;background:#ffdab9"></div>
<div style="left:1173px;top:261px;width:99px;height:17px;background:#ffdab9"></div>
<div style="left:1273px;top:261px;width:105px;height:17px;background:#ffdab9"></div>
<div style="left:1379px;top:261px;width:85px;height:17px;background:#ffdab9"></div>
<div style="left:1465px;top:261px;width:95px;height:17px;background:#98fb98"></div>
<div style="left:1561px;top:261px;width:15px;height:17px;background:#98fb98"></div>
<div class="t r" style="right:869.82px;top:271.18px;letter-spacing:0.087px;">90,00 dt/ha</div>
<div class="t r" style="right:707.64px;top:271.18px;letter-spacing:-0.012px;">0 kg/ha</div>
<div class="t r" style="right:642.18px;top:271.18px;letter-spacing:-0.012px;">0 kg/ha</div>
<div style="left:533px;top:296px;width:12px;height:1px;background:#ececec"></div>
<div style="left:545px;top:279px;width:1px;height:18px;background:#e2e2e2"></div>
<div style="left:637px;top:279px;width:940px;height:18px;background:#f9f9f9"></div>
<div style="left:962px;top:279px;width:615px;height:18px;background:#f0f0f0"></div>
<div style="left:546px;top:279px;width:90px;height:17px;background:#80ffff"></div>
<div class="t" style="left:547.78px;top:288.31px;letter-spacing:-1.250px;opacity:.85;color:#811">SM</div>
<div style="left:638px;top:280px;width:95px;height:15px;background:#f0f0f0"></div>
<div style="left:736px;top:280px;width:68px;height:15px;background:#f0f0f0"></div>
<div style="left:807px;top:280px;width:90px;height:15px;background:#f0f0f0"></div>
<div style="left:899px;top:280px;width:62px;height:15px;background:#ccffcc"></div>
<div style="left:962px;top:279px;width:95px;height:17px;background:#ffdab9"></div>
<div style="left:1058px;top:279px;width:114px;height:17px;background:#ffdab9"></div>
<div style="left:1173px;top:279px;width:99px;height:17px;background:#ffdab9"></div>
<div style="left:1273px;top:279px;width:105px;height:17px;background:#ffdab9"></div>
<div style="left:1379px;top:279px;width:85px;height:17px;background:#ffdab9"></div>
<div style="left:1465px;top:279px;width:95px;height:17px;background:#98fb98"></div>
<div style="left:1561px;top:279px;width:15px;height:17px;background:#98fb98"></div>
<div class="t r" style="right:869.82px;top:289.18px;letter-spacing:0.070px;">365,00 dt/ha</div>
<div class="t r" style="right:707.64px;top:289.18px;letter-spacing:-0.012px;">0 kg/ha</div>
<div class="t r" style="right:642.18px;top:289.18px;letter-spacing:-0.012px;">0 kg/ha</div>
<div style="left:533px;top:314px;width:12px;height:1px;background:#ececec"></div>
<div style="left:545px;top:297px;width:1px;height:18px;background:#e2e2e2"></div>
<div style="left:637px;top:297px;width:940px;height:18px;background:#f9f9f9"></div>
<div style="left:962px;top:297px;width:615px;height:18px;background:#f0f0f0"></div>
<div style="left:546px;top:297px;width:90px;height:17px;background:#ff0000"></div>
<div class="t" style="left:547.78px;top:306.31px;letter-spacing:-0.555px;opacity:.85;color:#3ff">WRA</div>
<div style="left:638px;top:298px;width:95px;height:15px;background:#f0f0f0"></div>
<div style="left:736px;top:298px;width:68px;height:15px;background:#f0f0f0"></div>
<div style="left:807px;top:298px;width:90px;height:15px;background:#f0f0f0"></div>
<div style="left:899px;top:298px;width:62px;height:15px;background:#ccffcc"></div>
<div style="left:962px;top:297px;width:95px;height:17px;background:#ffdab9"></div>
<div style="left:1058px;top:297px;width:114px;height:17px;background:#ffdab9"></div>
<div style="left:1173px;top:297px;width:99px;height:17px;background:#ffdab9"></div>
<div style="left:1273px;top:297px;width:105px;height:17px;background:#ffdab9"></div>
<div style="left:1379px;top:297px;width:85px;height:17px;background:#ffdab9"></div>
<div style="left:1465px;top:297px;width:95px;height:17px;background:#98fb98"></div>
<div style="left:1561px;top:297px;width:15px;height:17px;background:#98fb98"></div>
<div class="t r" style="right:869.82px;top:307.18px;letter-spacing:0.087px;">40,00 dt/ha</div>
<div class="t r" style="right:707.64px;top:307.18px;letter-spacing:-0.012px;">0 kg/ha</div>
<div class="t r" style="right:642.18px;top:307.18px;letter-spacing:-0.012px;">0 kg/ha</div>
<div style="left:533px;top:332px;width:12px;height:1px;background:#ececec"></div>
<div style="left:545px;top:315px;width:1px;height:18px;background:#e2e2e2"></div>
<div style="left:637px;top:315px;width:940px;height:18px;background:#f9f9f9"></div>
<div style="left:962px;top:315px;width:615px;height:18px;background:#f0f0f0"></div>
<div style="left:546px;top:315px;width:90px;height:17px;background:#ffff00"></div>
<div class="t" style="left:547.78px;top:324.31px;letter-spacing:-0.383px;opacity:.85;color:#22f">WW</div>
<div style="left:638px;top:316px;width:95px;height:15px;background:#f0f0f0"></div>
<div style="left:736px;top:316px;width:68px;height:15px;background:#f0f0f0"></div>
<div style="left:807px;top:316px;width:90px;height:15px;background:#f0f0f0"></div>
<div style="left:899px;top:316px;width:62px;height:15px;background:#ccffcc"></div>
<div style="left:962px;top:315px;width:95px;height:17px;background:#ffdab9"></div>
<div style="left:1058px;top:315px;width:114px;height:17px;background:#ffdab9"></div>
<div style="left:1173px;top:315px;width:99px;height:17px;background:#ffdab9"></div>
<div style="left:1273px;top:315px;width:105px;height:17px;background:#ffdab9"></div>
<div style="left:1379px;top:315px;width:85px;height:17px;background:#ffdab9"></div>
<div style="left:1465px;top:315px;width:95px;height:17px;background:#98fb98"></div>
<div style="left:1561px;top:315px;width:15px;height:17px;background:#98fb98"></div>
<div class="t r" style="right:869.82px;top:325.18px;letter-spacing:0.087px;">90,00 dt/ha</div>
<div class="t r" style="right:707.64px;top:325.18px;letter-spacing:-0.012px;">0 kg/ha</div>
<div class="t r" style="right:642.18px;top:325.18px;letter-spacing:-0.012px;">0 kg/ha</div>
<div style="left:533px;top:350px;width:12px;height:1px;background:#ececec"></div>
<div style="left:545px;top:333px;width:1px;height:18px;background:#e2e2e2"></div>
<div style="left:637px;top:333px;width:940px;height:18px;background:#f9f9f9"></div>
<div style="left:962px;top:333px;width:615px;height:18px;background:#f0f0f0"></div>
<div style="left:546px;top:333px;width:90px;height:17px;background:#800080"></div>
<div class="t" style="left:547.78px;top:342.31px;letter-spacing:-0.970px;opacity:.85;color:#8f8">WG</div>
<div style="left:638px;top:334px;width:95px;height:15px;background:#f0f0f0"></div>
<div style="left:736px;top:334px;width:68px;height:15px;background:#f0f0f0"></div>
<div style="left:807px;top:334px;width:90px;height:15px;background:#f0f0f0"></div>
<div style="left:899px;top:334px;width:62px;height:15px;background:#ccffcc"></div>
<div style="left:962px;top:333px;width:95px;height:17px;background:#ffdab9"></div>
<div style="left:1058px;top:333px;width:114px;height:17px;background:#ffdab9"></div>
<div style="left:1173px;top:333px;width:99px;height:17px;background:#ffdab9"></div>
<div style="left:1273px;top:333px;width:105px;height:17px;background:#ffdab9"></div>
<div style="left:1379px;top:333px;width:85px;height:17px;background:#ffdab9"></div>
<div style="left:1465px;top:333px;width:95px;height:17px;background:#98fb98"></div>
<div style="left:1561px;top:333px;width:15px;height:17px;background:#98fb98"></div>
<div class="t r" style="right:869.82px;top:343.18px;letter-spacing:0.087px;">87,00 dt/ha</div>
<div class="t r" style="right:707.64px;top:343.18px;letter-spacing:-0.012px;">0 kg/ha</div>
<div class="t r" style="right:642.18px;top:343.18px;letter-spacing:-0.012px;">0 kg/ha</div>
<div style="left:533px;top:368px;width:12px;height:1px;background:#ececec"></div>
<div style="left:545px;top:351px;width:1px;height:18px;background:#e2e2e2"></div>
<div style="left:637px;top:351px;width:940px;height:18px;background:#f9f9f9"></div>
<div style="left:962px;top:351px;width:615px;height:18px;background:#f0f0f0"></div>
<div style="left:546px;top:351px;width:90px;height:17px;background:#80ffff"></div>
<div class="t" style="left:547.78px;top:360.31px;letter-spacing:-1.250px;opacity:.85;color:#811">SM</div>
<div style="left:638px;top:352px;width:95px;height:15px;background:#f0f0f0"></div>
<div style="left:736px;top:352px;width:68px;height:15px;background:#f0f0f0"></div>
<div style="left:807px;top:352px;width:90px;height:15px;background:#f0f0f0"></div>
<div style="left:899px;top:352px;width:62px;height:15px;background:#ccffcc"></div>
<div style="left:962px;top:351px;width:95px;height:17px;background:#ffdab9"></div>
<div style="left:1058px;top:351px;width:114px;height:17px;background:#ffdab9"></div>
<div style="left:1173px;top:351px;width:99px;height:17px;background:#ffdab9"></div>
<div style="left:1273px;top:351px;width:105px;height:17px;background:#ffdab9"></div>
<div style="left:1379px;top:351px;width:85px;height:17px;background:#ffdab9"></div>
<div style="left:1465px;top:351px;width:95px;height:17px;background:#98fb98"></div>
<div style="left:1561px;top:351px;width:15px;height:17px;background:#98fb98"></div>
<div class="t r" style="right:869.82px;top:361.18px;letter-spacing:0.070px;">365,00 dt/ha</div>
<div class="t r" style="right:707.64px;top:361.18px;letter-spacing:-0.012px;">0 kg/ha</div>
<div class="t r" style="right:642.18px;top:361.18px;letter-spacing:-0.012px;">0 kg/ha</div>
<div style="left:533px;top:386px;width:12px;height:1px;background:#ececec"></div>
<div style="left:545px;top:369px;width:1px;height:18px;background:#e2e2e2"></div>
<div style="left:637px;top:369px;width:940px;height:18px;background:#f9f9f9"></div>
<div style="left:962px;top:369px;width:615px;height:18px;background:#f0f0f0"></div>
<div style="left:546px;top:369px;width:90px;height:17px;background:#ffff00"></div>
<div class="t" style="left:547.78px;top:378.31px;letter-spacing:-0.383px;opacity:.85;color:#22f">WW</div>
<div style="left:638px;top:370px;width:95px;height:15px;background:#f0f0f0"></div>
<div style="left:736px;top:370px;width:68px;height:15px;background:#f0f0f0"></div>
<div style="left:807px;top:370px;width:90px;height:15px;background:#f0f0f0"></div>
<div style="left:899px;top:370px;width:62px;height:15px;background:#ccffcc"></div>
<div style="left:962px;top:369px;width:95px;height:17px;background:#ffdab9"></div>
<div style="left:1058px;top:369px;width:114px;height:17px;background:#ffdab9"></div>
<div style="left:1173px;top:369px;width:99px;height:17px;background:#ffdab9"></div>
<div style="left:1273px;top:369px;width:105px;height:17px;background:#ffdab9"></div>
<div style="left:1379px;top:369px;width:85px;height:17px;background:#ffdab9"></div>
<div style="left:1465px;top:369px;width:95px;height:17px;background:#98fb98"></div>
<div style="left:1561px;top:369px;width:15px;height:17px;background:#98fb98"></div>
<div class="t r" style="right:869.82px;top:379.18px;letter-spacing:0.087px;">92,00 dt/ha</div>
<div class="t r" style="right:707.64px;top:379.18px;letter-spacing:-0.012px;">0 kg/ha</div>
<div class="t r" style="right:642.18px;top:379.18px;letter-spacing:-0.012px;">0 kg/ha</div>
<div style="left:533px;top:404px;width:12px;height:1px;background:#ececec"></div>
<div style="left:545px;top:387px;width:1px;height:18px;background:#e2e2e2"></div>
<div style="left:637px;top:387px;width:940px;height:18px;background:#f9f9f9"></div>
<div style="left:962px;top:387px;width:615px;height:18px;background:#f0f0f0"></div>
<div style="left:546px;top:387px;width:90px;height:17px;background:#ff0000"></div>
<div class="t" style="left:547.78px;top:396.31px;letter-spacing:-0.555px;opacity:.85;color:#3ff">WRA</div>
<div style="left:638px;top:388px;width:95px;height:15px;background:#f0f0f0"></div>
<div style="left:736px;top:388px;width:68px;height:15px;background:#f0f0f0"></div>
<div style="left:807px;top:388px;width:90px;height:15px;background:#f0f0f0"></div>
<div style="left:899px;top:388px;width:62px;height:15px;background:#ccffcc"></div>
<div style="left:962px;top:387px;width:95px;height:17px;background:#ffdab9"></div>
<div style="left:1058px;top:387px;width:114px;height:17px;background:#ffdab9"></div>
<div style="left:1173px;top:387px;width:99px;height:17px;background:#ffdab9"></div>
<div style="left:1273px;top:387px;width:105px;height:17px;background:#ffdab9"></div>
<div style="left:1379px;top:387px;width:85px;height:17px;background:#ffdab9"></div>
<div style="left:1465px;top:387px;width:95px;height:17px;background:#98fb98"></div>
<div style="left:1561px;top:387px;width:15px;height:17px;background:#98fb98"></div>
<div class="t r" style="right:869.82px;top:397.18px;letter-spacing:0.087px;">40,00 dt/ha</div>
<div class="t r" style="right:707.64px;top:397.18px;letter-spacing:-0.012px;">0 kg/ha</div>
<div class="t r" style="right:642.18px;top:397.18px;letter-spacing:-0.012px;">0 kg/ha</div>
<div style="left:533px;top:422px;width:12px;height:1px;background:#ececec"></div>
<div style="left:545px;top:405px;width:1px;height:18px;background:#e2e2e2"></div>
<div style="left:637px;top:405px;width:940px;height:18px;background:#f9f9f9"></div>
<div style="left:962px;top:405px;width:615px;height:18px;background:#f0f0f0"></div>
<div style="left:546px;top:405px;width:90px;height:17px;background:#800080"></div>
<div class="t" style="left:547.78px;top:414.31px;letter-spacing:-0.970px;opacity:.85;color:#8f8">WG</div>
<div style="left:638px;top:406px;width:95px;height:15px;background:#f0f0f0"></div>
<div style="left:736px;top:406px;width:68px;height:15px;background:#f0f0f0"></div>
<div style="left:807px;top:406px;width:90px;height:15px;background:#f0f0f0"></div>
<div style="left:899px;top:406px;width:62px;height:15px;background:#ccffcc"></div>
<div style="left:962px;top:405px;width:95px;height:17px;background:#ffdab9"></div>
<div style="left:1058px;top:405px;width:114px;height:17px;background:#ffdab9"></div>
<div style="left:1173px;top:405px;width:99px;height:17px;background:#ffdab9"></div>
<div style="left:1273px;top:405px;width:105px;height:17px;background:#ffdab9"></div>
<div style="left:1379px;top:405px;width:85px;height:17px;background:#ffdab9"></div>
<div style="left:1465px;top:405px;width:95px;height:17px;background:#98fb98"></div>
<div style="left:1561px;top:405px;width:15px;height:17px;background:#98fb98"></div>
<div class="t r" style="right:869.82px;top:415.18px;letter-spacing:0.087px;">87,00 dt/ha</div>
<div class="t r" style="right:707.64px;top:415.18px;letter-spacing:-0.012px;">0 kg/ha</div>
<div class="t r" style="right:642.18px;top:415.18px;letter-spacing:-0.012px;">0 kg/ha</div>
<div style="left:533px;top:440px;width:12px;height:1px;background:#ececec"></div>
<div style="left:545px;top:423px;width:1px;height:18px;background:#e2e2e2"></div>
<div style="left:637px;top:423px;width:940px;height:18px;background:#f9f9f9"></div>
<div style="left:962px;top:423px;width:615px;height:18px;background:#f0f0f0"></div>
<div style="left:546px;top:423px;width:90px;height:17px;background:#ff0000"></div>
<div class="t" style="left:547.78px;top:432.31px;letter-spacing:-0.555px;opacity:.85;color:#3ff">WRA</div>
<div style="left:638px;top:424px;width:95px;height:15px;background:#f0f0f0"></div>
<div style="left:736px;top:424px;width:68px;height:15px;background:#f0f0f0"></div>
<div style="left:807px;top:424px;width:90px;height:15px;background:#f0f0f0"></div>
<div style="left:899px;top:424px;width:62px;height:15px;background:#ccffcc"></div>
<div style="left:962px;top:423px;width:95px;height:17px;background:#ffdab9"></div>
<div style="left:1058px;top:423px;width:114px;height:17px;background:#ffdab9"></div>
<div style="left:1173px;top:423px;width:99px;height:17px;background:#ffdab9"></div>
<div style="left:1273px;top:423px;width:105px;height:17px;background:#ffdab9"></div>
<div style="left:1379px;top:423px;width:85px;height:17px;background:#ffdab9"></div>
<div style="left:1465px;top:423px;width:95px;height:17px;background:#98fb98"></div>
<div style="left:1561px;top:423px;width:15px;height:17px;background:#98fb98"></div>
<div class="t r" style="right:869.82px;top:433.18px;letter-spacing:0.087px;">40,00 dt/ha</div>
<div class="t r" style="right:707.64px;top:433.18px;letter-spacing:-0.012px;">0 kg/ha</div>
<div class="t r" style="right:642.18px;top:433.18px;letter-spacing:-0.012px;">0 kg/ha</div>
<div style="left:533px;top:458px;width:12px;height:1px;background:#ececec"></div>
<div style="left:545px;top:441px;width:1px;height:18px;background:#e2e2e2"></div>
<div style="left:637px;top:441px;width:940px;height:18px;background:#f9f9f9"></div>
<div style="left:962px;top:441px;width:615px;height:18px;background:#f0f0f0"></div>
<div style="left:546px;top:441px;width:90px;height:17px;background:#80ff80"></div>
<div class="t" style="left:547.78px;top:450.31px;letter-spacing:-0.529px;opacity:.85;color:#781878">WIES</div>
<div style="left:638px;top:442px;width:95px;height:15px;background:#f0f0f0"></div>
<div style="left:736px;top:442px;width:68px;height:15px;background:#f0f0f0"></div>
<div style="left:807px;top:442px;width:90px;height:15px;background:#f0f0f0"></div>
<div style="left:899px;top:442px;width:62px;height:15px;background:#ccffcc"></div>
<div style="left:962px;top:441px;width:95px;height:17px;background:#ffdab9"></div>
<div style="left:1058px;top:441px;width:114px;height:17px;background:#ffdab9"></div>
<div style="left:1173px;top:441px;width:99px;height:17px;background:#ffdab9"></div>
<div style="left:1273px;top:441px;width:105px;height:17px;background:#ffdab9"></div>
<div style="left:1379px;top:441px;width:85px;height:17px;background:#ffdab9"></div>
<div style="left:1465px;top:441px;width:95px;height:17px;background:#98fb98"></div>
<div style="left:1561px;top:441px;width:15px;height:17px;background:#98fb98"></div>
<div class="t r" style="right:869.82px;top:451.18px;letter-spacing:0.070px;">250,00 dt/ha</div>
<div class="t r" style="right:707.64px;top:451.18px;letter-spacing:-0.012px;">0 kg/ha</div>
<div class="t r" style="right:642.18px;top:451.18px;letter-spacing:-0.012px;">0 kg/ha</div>
<div style="left:533px;top:476px;width:12px;height:1px;background:#ececec"></div>
<div style="left:545px;top:459px;width:1px;height:18px;background:#e2e2e2"></div>
<div style="left:637px;top:459px;width:940px;height:18px;background:#f9f9f9"></div>
<div style="left:962px;top:459px;width:615px;height:18px;background:#f0f0f0"></div>
<div style="left:546px;top:459px;width:90px;height:17px;background:#80ff80"></div>
<div class="t" style="left:547.78px;top:468.31px;letter-spacing:-0.529px;opacity:.85;color:#781878">WIES</div>
<div style="left:638px;top:460px;width:95px;height:15px;background:#f0f0f0"></div>
<div style="left:736px;top:460px;width:68px;height:15px;background:#f0f0f0"></div>
<div style="left:807px;top:460px;width:90px;height:15px;background:#f0f0f0"></div>
<div style="left:899px;top:460px;width:62px;height:15px;background:#ccffcc"></div>
<div style="left:962px;top:459px;width:95px;height:17px;background:#ffdab9"></div>
<div style="left:1058px;top:459px;width:114px;height:17px;background:#ffdab9"></div>
<div style="left:1173px;top:459px;width:99px;height:17px;background:#ffdab9"></div>
<div style="left:1273px;top:459px;width:105px;height:17px;background:#ffdab9"></div>
<div style="left:1379px;top:459px;width:85px;height:17px;background:#ffdab9"></div>
<div style="left:1465px;top:459px;width:95px;height:17px;background:#98fb98"></div>
<div style="left:1561px;top:459px;width:15px;height:17px;background:#98fb98"></div>
<div class="t r" style="right:869.82px;top:469.18px;letter-spacing:0.070px;">250,00 dt/ha</div>
<div class="t r" style="right:707.64px;top:469.18px;letter-spacing:-0.012px;">0 kg/ha</div>
<div class="t r" style="right:642.18px;top:469.18px;letter-spacing:-0.012px;">0 kg/ha</div>
<div style="left:533px;top:494px;width:12px;height:1px;background:#ececec"></div>
<div style="left:545px;top:477px;width:1px;height:18px;background:#e2e2e2"></div>
<div style="left:637px;top:477px;width:940px;height:18px;background:#f9f9f9"></div>
<div style="left:962px;top:477px;width:615px;height:18px;background:#f0f0f0"></div>
<div style="left:636px;top:477px;width:1px;height:18px;background:#e2e2e2"></div>
<div style="left:546px;top:494px;width:90px;height:1px;background:#ececec"></div>
<div style="left:638px;top:478px;width:95px;height:15px;background:#f0f0f0"></div>
<div style="left:736px;top:478px;width:68px;height:15px;background:#f0f0f0"></div>
<div style="left:807px;top:478px;width:90px;height:15px;background:#f0f0f0"></div>
<div style="left:899px;top:478px;width:62px;height:15px;background:#ccffcc"></div>
<div style="left:962px;top:477px;width:95px;height:17px;background:#ffdab9"></div>
<div style="left:1058px;top:477px;width:114px;height:17px;background:#ffdab9"></div>
<div style="left:1173px;top:477px;width:99px;height:17px;background:#ffdab9"></div>
<div style="left:1273px;top:477px;width:105px;height:17px;background:#ffdab9"></div>
<div style="left:1379px;top:477px;width:85px;height:17px;background:#ffdab9"></div>
<div style="left:1465px;top:477px;width:95px;height:17px;background:#98fb98"></div>
<div style="left:1561px;top:477px;width:15px;height:17px;background:#98fb98"></div>
<div class="t r" style="right:869.82px;top:487.18px;letter-spacing:0.107px;">0,00 dt/ha</div>
<div class="t r" style="right:707.64px;top:487.18px;letter-spacing:-0.012px;">0 kg/ha</div>
<div class="t r" style="right:642.18px;top:487.18px;letter-spacing:-0.012px;">0 kg/ha</div>
<div style="left:533px;top:512px;width:12px;height:1px;background:#ececec"></div>
<div style="left:545px;top:495px;width:1px;height:18px;background:#e2e2e2"></div>
<div style="left:637px;top:495px;width:940px;height:18px;background:#f9f9f9"></div>
<div style="left:962px;top:495px;width:615px;height:18px;background:#f0f0f0"></div>
<div style="left:636px;top:495px;width:1px;height:18px;background:#e2e2e2"></div>
<div style="left:546px;top:512px;width:90px;height:1px;background:#ececec"></div>
<div style="left:638px;top:496px;width:95px;height:15px;background:#f0f0f0"></div>
<div style="left:736px;top:496px;width:68px;height:15px;background:#f0f0f0"></div>
<div style="left:807px;top:496px;width:90px;height:15px;background:#f0f0f0"></div>
<div style="left:899px;top:496px;width:62px;height:15px;background:#ccffcc"></div>
<div style="left:962px;top:495px;width:95px;height:17px;background:#ffdab9"></div>
<div style="left:1058px;top:495px;width:114px;height:17px;background:#ffdab9"></div>
<div style="left:1173px;top:495px;width:99px;height:17px;background:#ffdab9"></div>
<div style="left:1273px;top:495px;width:105px;height:17px;background:#ffdab9"></div>
<div style="left:1379px;top:495px;width:85px;height:17px;background:#ffdab9"></div>
<div style="left:1465px;top:495px;width:95px;height:17px;background:#98fb98"></div>
<div style="left:1561px;top:495px;width:15px;height:17px;background:#98fb98"></div>
<div class="t r" style="right:869.82px;top:505.18px;letter-spacing:0.107px;">0,00 dt/ha</div>
<div class="t r" style="right:707.64px;top:505.18px;letter-spacing:-0.012px;">0 kg/ha</div>
<div class="t r" style="right:642.18px;top:505.18px;letter-spacing:-0.012px;">0 kg/ha</div>
<div style="left:533px;top:530px;width:12px;height:1px;background:#ececec"></div>
<div style="left:545px;top:513px;width:1px;height:18px;background:#e2e2e2"></div>
<div style="left:637px;top:513px;width:940px;height:18px;background:#f9f9f9"></div>
<div style="left:962px;top:513px;width:615px;height:18px;background:#f0f0f0"></div>
<div style="left:636px;top:513px;width:1px;height:18px;background:#e2e2e2"></div>
<div style="left:546px;top:530px;width:90px;height:1px;background:#ececec"></div>
<div style="left:638px;top:514px;width:95px;height:15px;background:#f0f0f0"></div>
<div style="left:736px;top:514px;width:68px;height:15px;background:#f0f0f0"></div>
<div style="left:807px;top:514px;width:90px;height:15px;background:#f0f0f0"></div>
<div style="left:899px;top:514px;width:62px;height:15px;background:#ccffcc"></div>
<div style="left:962px;top:513px;width:95px;height:17px;background:#ffdab9"></div>
<div style="left:1058px;top:513px;width:114px;height:17px;background:#ffdab9"></div>
<div style="left:1173px;top:513px;width:99px;height:17px;background:#ffdab9"></div>
<div style="left:1273px;top:513px;width:105px;height:17px;background:#ffdab9"></div>
<div style="left:1379px;top:513px;width:85px;height:17px;background:#ffdab9"></div>
<div style="left:1465px;top:513px;width:95px;height:17px;background:#98fb98"></div>
<div style="left:1561px;top:513px;width:15px;height:17px;background:#98fb98"></div>
<div class="t r" style="right:869.82px;top:523.18px;letter-spacing:0.107px;">0,00 dt/ha</div>
<div class="t r" style="right:707.64px;top:523.18px;letter-spacing:-0.012px;">0 kg/ha</div>
<div class="t r" style="right:642.18px;top:523.18px;letter-spacing:-0.012px;">0 kg/ha</div>
<div style="left:533px;top:548px;width:12px;height:1px;background:#ececec"></div>
<div style="left:545px;top:531px;width:1px;height:18px;background:#e2e2e2"></div>
<div style="left:637px;top:531px;width:940px;height:18px;background:#f9f9f9"></div>
<div style="left:962px;top:531px;width:615px;height:18px;background:#f0f0f0"></div>
<div style="left:636px;top:531px;width:1px;height:18px;background:#e2e2e2"></div>
<div style="left:546px;top:548px;width:90px;height:1px;background:#ececec"></div>
<div style="left:638px;top:532px;width:95px;height:15px;background:#f0f0f0"></div>
<div style="left:736px;top:532px;width:68px;height:15px;background:#f0f0f0"></div>
<div style="left:807px;top:532px;width:90px;height:15px;background:#f0f0f0"></div>
<div style="left:899px;top:532px;width:62px;height:15px;background:#ccffcc"></div>
<div style="left:962px;top:531px;width:95px;height:17px;background:#ffdab9"></div>
<div style="left:1058px;top:531px;width:114px;height:17px;background:#ffdab9"></div>
<div style="left:1173px;top:531px;width:99px;height:17px;background:#ffdab9"></div>
<div style="left:1273px;top:531px;width:105px;height:17px;background:#ffdab9"></div>
<div style="left:1379px;top:531px;width:85px;height:17px;background:#ffdab9"></div>
<div style="left:1465px;top:531px;width:95px;height:17px;background:#98fb98"></div>
<div style="left:1561px;top:531px;width:15px;height:17px;background:#98fb98"></div>
<div class="t r" style="right:869.82px;top:541.18px;letter-spacing:0.107px;">0,00 dt/ha</div>
<div class="t r" style="right:707.64px;top:541.18px;letter-spacing:-0.012px;">0 kg/ha</div>
<div class="t r" style="right:642.18px;top:541.18px;letter-spacing:-0.012px;">0 kg/ha</div>
<div style="left:533px;top:566px;width:12px;height:1px;background:#ececec"></div>
<div style="left:545px;top:549px;width:1px;height:18px;background:#e2e2e2"></div>
<div style="left:637px;top:549px;width:940px;height:18px;background:#f9f9f9"></div>
<div style="left:962px;top:549px;width:615px;height:18px;background:#f0f0f0"></div>
<div style="left:636px;top:549px;width:1px;height:18px;background:#e2e2e2"></div>
<div style="left:546px;top:566px;width:90px;height:1px;background:#ececec"></div>
<div style="left:638px;top:550px;width:95px;height:15px;background:#f0f0f0"></div>
<div style="left:736px;top:550px;width:68px;height:15px;background:#f0f0f0"></div>
<div style="left:807px;top:550px;width:90px;height:15px;background:#f0f0f0"></div>
<div style="left:899px;top:550px;width:62px;height:15px;background:#ccffcc"></div>
<div style="left:962px;top:549px;width:95px;height:17px;background:#ffdab9"></div>
<div style="left:1058px;top:549px;width:114px;height:17px;background:#ffdab9"></div>
<div style="left:1173px;top:549px;width:99px;height:17px;background:#ffdab9"></div>
<div style="left:1273px;top:549px;width:105px;height:17px;background:#ffdab9"></div>
<div style="left:1379px;top:549px;width:85px;height:17px;background:#ffdab9"></div>
<div style="left:1465px;top:549px;width:95px;height:17px;background:#98fb98"></div>
<div style="left:1561px;top:549px;width:15px;height:17px;background:#98fb98"></div>
<div class="t r" style="right:869.82px;top:559.18px;letter-spacing:0.107px;">0,00 dt/ha</div>
<div class="t r" style="right:707.64px;top:559.18px;letter-spacing:-0.012px;">0 kg/ha</div>
<div class="t r" style="right:642.18px;top:559.18px;letter-spacing:-0.012px;">0 kg/ha</div>
<div style="left:533px;top:584px;width:12px;height:1px;background:#ececec"></div>
<div style="left:545px;top:567px;width:1px;height:18px;background:#e2e2e2"></div>
<div style="left:637px;top:567px;width:940px;height:18px;background:#f9f9f9"></div>
<div style="left:962px;top:567px;width:615px;height:18px;background:#f0f0f0"></div>
<div style="left:636px;top:567px;width:1px;height:18px;background:#e2e2e2"></div>
<div style="left:546px;top:584px;width:90px;height:1px;background:#ececec"></div>
<div style="left:638px;top:568px;width:95px;height:15px;background:#f0f0f0"></div>
<div style="left:736px;top:568px;width:68px;height:15px;background:#f0f0f0"></div>
<div style="left:807px;top:568px;width:90px;height:15px;background:#f0f0f0"></div>
<div style="left:899px;top:568px;width:62px;height:15px;background:#ccffcc"></div>
<div style="left:962px;top:567px;width:95px;height:17px;background:#ffdab9"></div>
<div style="left:1058px;top:567px;width:114px;height:17px;background:#ffdab9"></div>
<div style="left:1173px;top:567px;width:99px;height:17px;background:#ffdab9"></div>
<div style="left:1273px;top:567px;width:105px;height:17px;background:#ffdab9"></div>
<div style="left:1379px;top:567px;width:85px;height:17px;background:#ffdab9"></div>
<div style="left:1465px;top:567px;width:95px;height:17px;background:#98fb98"></div>
<div style="left:1561px;top:567px;width:15px;height:17px;background:#98fb98"></div>
<div class="t r" style="right:869.82px;top:577.18px;letter-spacing:0.107px;">0,00 dt/ha</div>
<div class="t r" style="right:707.64px;top:577.18px;letter-spacing:-0.012px;">0 kg/ha</div>
<div class="t r" style="right:642.18px;top:577.18px;letter-spacing:-0.012px;">0 kg/ha</div>
<svg style="left:537.02px;top:192.29px" width="8" height="12"><path d="M0 0 L6.5 5.5 L0 11z" fill="#000"/></svg>
<div style="left:1577px;top:157px;width:17px;height:831px;background:#f0f0f0"></div>
<div style="left:1577px;top:175px;width:14px;height:406px;background:#cdcdcd"></div>
<div style="left:533px;top:988px;width:1061px;height:17px;background:#f0f0f0"></div>
<div style="left:551px;top:988px;width:17px;height:15px;background:#cdcdcd"></div>
<div style="left:533.67px;top:1028.8px;width:1059.78px;height:142.98px;background:#fff;border:1px solid #dcdcdc"></div>
<div style="left:579.93px;top:1011.64px;width:47.42px;height:17.89px;background:#f0f0f0;border:1px solid #d9d9d9"></div>
<div style="left:534.69px;top:1008.44px;width:45.53px;height:21.53px;background:#fff;border:1px solid #d9d9d9;border-bottom:none"></div>
<div class="t" style="left:539.2px;top:1018.18px;letter-spacing:-0.232px;">Details</div>
<div class="t" style="left:584px;top:1021.53px;letter-spacing:-0.669px;">Summen</div>
<div style="left:536.73px;top:1052.51px;width:1053.09px;height:117.38px;background:#fff;border:1px solid #dcdcdc"></div>
<div style="left:602.18px;top:1036.07px;width:62.11px;height:17.45px;background:#f0f0f0;border:1px solid #d9d9d9"></div>
<div class="t" style="left:607.71px;top:1045.24px;letter-spacing:-0.312px;">1b N-Gabe</div>
<div style="left:663.27px;top:1036.07px;width:62.4px;height:17.45px;background:#f0f0f0;border:1px solid #d9d9d9"></div>
<div class="t" style="left:669.82px;top:1045.24px;letter-spacing:-0.305px;">2. N-Gabe</div>
<div style="left:724.65px;top:1036.07px;width:61.82px;height:17.45px;background:#f0f0f0;border:1px solid #d9d9d9"></div>
<div class="t" style="left:731.2px;top:1045.24px;letter-spacing:-0.305px;">3. N-Gabe</div>
<div style="left:785.45px;top:1036.07px;width:62.11px;height:17.45px;background:#f0f0f0;border:1px solid #d9d9d9"></div>
<div class="t" style="left:791.71px;top:1045.24px;letter-spacing:-0.305px;">4. N-Gabe</div>
<div style="left:846.55px;top:1036.07px;width:62.11px;height:17.45px;background:#f0f0f0;border:1px solid #d9d9d9"></div>
<div class="t" style="left:852.36px;top:1045.24px;letter-spacing:-0.305px;">5. N-Gabe</div>
<div style="left:907.64px;top:1036.07px;width:75.2px;height:17.45px;background:#f0f0f0;border:1px solid #d9d9d9"></div>
<div class="t" style="left:912.58px;top:1045.24px;letter-spacing:-0.322px;">keine N-Gabe</div>
<div style="left:536.73px;top:1033.45px;width:65.89px;height:20.36px;background:#fff;border:1px solid #d9d9d9;border-bottom:none"></div>
<div class="t" style="left:544.73px;top:1043.49px;letter-spacing:-0.312px;">1a N-Gabe</div>
<div style="left:540.07px;top:1057.75px;width:185.02px;height:109.24px;background:#fff;border:1px solid #b4b4b4"></div>
<div style="left:541.09px;top:1058.76px;width:183.27px;height:19.93px;background:#f0f0f0;border:1px solid #6d6d6d"></div>
<div style="left:546.18px;top:1141.09px;width:72.73px;height:20.51px;background:#cccccc;border:1px solid #bfbfbf;color:#848484;text-align:center;line-height:18.91px">Neu</div>
<div style="left:638.11px;top:1141.09px;width:72.73px;height:20.51px;background:#cccccc;border:1px solid #bfbfbf;color:#848484;text-align:center;line-height:18.91px">Löschen</div>
<div class="t" style="left:747.93px;top:1073.45px;letter-spacing:-0.154px;">Düngemittel</div>
<div style="left:747.64px;top:1081.45px;width:165.38px;height:20.36px;border:1px solid #7a7a7a;background:#fff"></div>
<div style="left:894.25px;top:1083.05px;width:16.58px;height:16.58px;background:#e6e6e6;border:1px solid #adadad"></div>
<svg style="left:897.45px;top:1088.29px" width="10.18" height="7.27" viewBox="0 0 7 5"><path d="M.6 .8 L3.5 3.8 L6.4 .8" fill="none" stroke="#444" stroke-width=".9"/></svg>
<div class="t" style="left:936px;top:1073.45px;letter-spacing:-0.167px;">Termin</div>
<div style="left:936px;top:1081.45px;width:120.87px;height:20.36px;border:1px solid #7a7a7a;background:#ffffe1"></div>
<div style="left:1038.69px;top:1083.35px;width:16px;height:8.15px;background:#ececec;border:1px solid #a8a8a8"></div>
<div style="left:1038.69px;top:1091.49px;width:16px;height:8.15px;background:#ececec;border:1px solid #a8a8a8"></div>
<svg style="left:1043.2px;top:1085.38px" width="7.27" height="12.22" viewBox="0 0 5 8.4"><path d="M.4 2.6 L2.5 .4 L4.6 2.6z M.4 5.8 L2.5 8 L4.6 5.8z" fill="#111"/></svg>
<div class="t" style="left:1079.85px;top:1073.45px;letter-spacing:-0.284px;">Maßnahmefläche</div>
<div style="left:1079.85px;top:1081.45px;width:121.45px;height:20.36px;border:1px solid #7a7a7a;background:#fff"></div>
<div class="t" style="left:747.93px;top:1123.49px;letter-spacing:-0.212px;">Produktmenge</div>
<div style="left:747.64px;top:1131.2px;width:165.38px;height:20.36px;border:1px solid #7a7a7a;background:#fff"></div>
<div class="t" style="left:936px;top:1123.49px;letter-spacing:-0.133px;">Stickstoff der Maßnahme</div>
<div style="left:936px;top:1131.2px;width:120.87px;height:20.36px;border:1px solid #7a7a7a;background:#fff"></div>
<div class="t" style="left:1079.85px;top:1123.49px;letter-spacing:-0.153px;">Stickstoff des Schlages</div>
<div style="left:1079.85px;top:1131.2px;width:121.45px;height:20.36px;border:1px solid #7a7a7a;background:#fff"></div>
<svg style="left:8.58px;top:7.13px" width="16.15" height="15.85" viewBox="0 0 11.1 10.9"><rect width="11.1" height="10.9" fill="#c6cecf"/><g fill="none" stroke="#27a013" stroke-width="1.35" stroke-linecap="round" stroke-linejoin="round"><path d="M.9 1.5 L4.6 5.5 L.6 9.6"/><path d="M3.4 9.6 L5.6 7.3 L8 9.7"/><path d="M5.8 6.8 L7.4 4.8 M7 2.8 L8.6 3.4 L10 1.8" stroke-dasharray="1.6 .5"/></g><circle cx="10.1" cy="1.7" r="1" fill="#27a013"/><circle cx="6.8" cy="2.8" r=".95" fill="#27a013"/></svg>
<svg style="left:8.15px;top:31.85px" width="16.15" height="15.85" viewBox="0 0 11.1 10.9"><rect width="11.1" height="10.9" fill="#c6cecf"/><g fill="none" stroke="#27a013" stroke-width="1.35" stroke-linecap="round" stroke-linejoin="round"><path d="M.9 1.5 L4.6 5.5 L.6 9.6"/><path d="M3.4 9.6 L5.6 7.3 L8 9.7"/><path d="M5.8 6.8 L7.4 4.8 M7 2.8 L8.6 3.4 L10 1.8" stroke-dasharray="1.6 .5"/></g><circle cx="10.1" cy="1.7" r="1" fill="#27a013"/><circle cx="6.8" cy="2.8" r=".95" fill="#27a013"/></svg>
<svg style="left:1469.09px;top:0px" width="130.91" height="30.55" viewBox="0 0 90 21"><path d="M7.3 10.4h7.2" stroke="#111" stroke-width=".8"/><rect x="38.2" y="7.1" width="7" height="6.5" fill="none" stroke="#111" stroke-width=".8"/><path d="M70 7 L77 13.8 M77 7 L70 13.8" stroke="#111" stroke-width=".8"/></svg>
<div style="left:1542.55px;top:32.87px;width:16.44px;height:16.87px;background:#fbfbfb;border:1px solid #efefef"></div>
<div style="left:1560.73px;top:32.87px;width:16.44px;height:16.87px;background:#fbfbfb;border:1px solid #efefef"></div>
<div style="left:1579.64px;top:32.87px;width:16.44px;height:16.87px;background:#fbfbfb;border:1px solid #efefef"></div>
<svg style="left:1541.82px;top:32px" width="58.18" height="18.91" viewBox="0 0 40 13"><path d="M3.6 8.2h4.2" stroke="#4e6a98" stroke-width="1.3"/><path d="M17.2 4.2h4.6v3.2h-4.6z M16 5.6h4.4v3.2H16z" fill="#fbfbfb" stroke="#4e6a98" stroke-width=".8"/><path d="M30.2 4.2 L35.2 9 M35.2 4.2 L30.2 9" stroke="#4e6a98" stroke-width="1.4"/></svg>
<svg style="left:8.73px;top:59.64px" width="21.82" height="24.73" viewBox="0 0 15 17"><path d="M2 6.2V15.8H13V6.2L7.5 1.8z" fill="#1a1a1a"/><path d="M.4 7 L7.5 1 L14.6 7" stroke="#8aab45" stroke-width="1.2" fill="none"/><rect x="7.6" y="9.6" width="2.9" height="5.4" fill="#fff"/><rect x="3.6" y="9.6" width="2.6" height="2.4" fill="#fff"/></svg>
<svg style="left:37.82px;top:61.09px" width="26.18" height="21.82" viewBox="0 0 18 15"><g fill="#1b5fc4"><path d="M5.8 .3H17.4L11.8 5H.2z"/><path d="M5.8 4.9H17.4L11.8 9.6H.2z" stroke="#d9ecff" stroke-width=".5"/><path d="M5.8 9.6H17.4L11.8 14.4H.2z" stroke="#d9ecff" stroke-width=".5"/></g></svg>
<svg style="left:68.36px;top:61.09px" width="26.18" height="21.82" viewBox="0 0 18 15"><path d="M3.4 .8H9.4V5H14.6Q16 5 16 6.6V9.6H2V4.4z" fill="#f0a024"/><path d="M4.8 2.2H8V5H4z" fill="#fff6e0"/><circle cx="4.2" cy="10.4" r="3.2" fill="#fff" stroke="#111" stroke-width="1.7"/><circle cx="14.2" cy="11.4" r="2.1" fill="#fff" stroke="#111" stroke-width="1.5"/><path d="M7.6 9.2h4.2" stroke="#333" stroke-width="1"/></svg>
<svg style="left:100.36px;top:60.36px" width="23.27" height="24.73" viewBox="0 0 16 17"><g fill="none" stroke="#222" stroke-width="1.1"><path d="M1.4 .8V13.6a1.4 1.4 0 0 0 2.8 0V.8"/><path d="M6.3 .8V13.6a1.4 1.4 0 0 0 2.8 0V.8"/><path d="M11.2 .8V13.6a1.4 1.4 0 0 0 2.8 0V.8"/></g><rect x="2.1" y="9.5" width="1.4" height="4.6" fill="#9bbf3a"/><rect x="7" y="5" width="1.4" height="9" fill="#f0a024"/><rect x="11.9" y="7.4" width="1.4" height="6.8" fill="#f3c61e"/></svg>
<svg style="left:130.91px;top:61.09px" width="24.73" height="21.82" viewBox="0 0 17 15"><rect x="3.8" y="1" width="9.4" height="8.2" fill="#f4f4f4" stroke="#333" stroke-width="1.2"/><path d="M7.4 1h2.2v2.2l-1.1-.7-1.1.7z" fill="#333"/><path d="M.4 10.6H16.6V14H15V12H9.3V14H7.7V12H2V14H.4z" fill="#111"/></svg>
<svg style="left:168px;top:60.36px" width="13.09" height="23.27" viewBox="0 0 9 16"><path d="M2.2 .4 L3.2 4.4 M6.4 .4 L5.4 4.4 M4.3 .2 V3.6 M1.2 1.6 L2.4 4.8 M7.4 1.6 L6.2 4.8" stroke="#7d7d7d" stroke-width=".9"/><path d="M3 4.6V12.6 M5.6 4.6V12.6" stroke="#9aac2e" stroke-width="1.7" stroke-dasharray="1.5 .7"/><path d="M1.6 5.4 L1.6 11.6 L4.3 14.2 L7 11.6 L7 5.4" fill="none" stroke="#a9b94a" stroke-width=".8" stroke-dasharray="1.4 .8"/><path d="M4.3 13V15.6" stroke="#222" stroke-width="1.2"/></svg>
<svg style="left:192px;top:59.64px" width="26.18" height="24.73" viewBox="0 0 18 17"><rect x=".8" y=".4" width="7" height="8" fill="#fff" opacity=".8"/><path d="M.8 .2V8.6H8" stroke="#8a8a8a" stroke-width="1.2" fill="none"/><path d="M1.8 5 L3.6 3.4 L5 3.8 L7.6 1.2" stroke="#3c8ae0" stroke-width="1" stroke-dasharray="1.2 .5" fill="none"/><path d="M1.8 7 L4 5.8 L5.4 6.2 L7.6 4.6" stroke="#444" stroke-width=".8" fill="none"/><path d="M9.4 8.4H17.6" stroke="#555" stroke-width=".9"/><g fill="#f0a024"><rect x="10.4" y="3.8" width="1.7" height="4.4"/><rect x="12.9" y="2.4" width="1.7" height="5.8"/><rect x="15.4" y="1.4" width="1.7" height="6.8"/></g><path d="M9.8 1.4V8.2 M12.4 .8V8.2 M14.9 1.8V8.2" stroke="#333" stroke-width=".8"/><path d="M4.7 10 L8.2 16H1.2z" fill="#f3d21e"/><path d="M4.7 10 L5.7 11.7H3.7z M2.9 13 H6.5 L7.1 14.1 H2.3z M1.6 15.2H7.8L8.2 16H1.2z" fill="#1c1c1c"/><circle cx="13.1" cy="12.7" r="3.6" fill="#262626"/><path d="M13.1 12.7V9.1A3.6 3.6 0 0 1 16.7 12.7z" fill="#8fb44a"/><path d="M13.1 12.7H16.7A3.6 3.6 0 0 1 14.6 16z" fill="#8a8a8a"/></svg>
<div style="left:224.73px;top:66.47px;height:10px;line-height:10px;font-size:9.6px;font-weight:bold;color:#0f6a2a;transform:scaleX(.74);transform-origin:0 0;text-shadow:0 0 1.5px #fff,0 0 1.5px #fff;-webkit-text-stroke:.5px #0f6a2a">FENDT</div>
<svg style="left:257.16px;top:70.98px" width="7.56" height="4.07" viewBox="0 0 5.2 2.8"><path d="M0 0H5.2L2.6 2.8z" fill="#111"/></svg>
<svg style="left:270.55px;top:61.09px" width="24" height="21.09" viewBox="0 0 16.5 14.5"><rect x=".7" y=".9" width="7.2" height="12.6" rx=".8" fill="#fff" stroke="#2a2a2a" stroke-width="1.1"/><rect x="8.5" y=".9" width="7.2" height="12.6" rx=".8" fill="#fff" stroke="#2a2a2a" stroke-width="1.1"/><path d="M1.9 3h4.6M1.9 5.2h4.6M1.9 7.4h4.6M1.9 9.6h4.6M1.9 11.6h4.6M9.9 3h4.6M9.9 5.2h4.6M9.9 7.4h4.6M9.9 9.6h4.6M9.9 11.6h4.6" stroke="#c6dd86" stroke-width="1.1"/><path d="M8.2 .8V13.6" stroke="#1a1a1a" stroke-width="1.6" stroke-dasharray="1.5 .5"/></svg>
<svg style="left:303.42px;top:60.51px" width="19.78" height="21.82" viewBox="0 0 13.6 15"><rect x=".7" y="2.6" width="12" height="11.6" fill="#fff" stroke="#6a6a6a" stroke-width="1"/><rect x=".7" y="2.6" width="12" height="3.4" fill="#8cad46"/><path d="M2.6 .3V3M5.2 .3V3M7.9 .3V3M10.6 .3V3" stroke="#111" stroke-width="1.5"/></svg>
<div style="left:304.58px;top:70.69px;width:17.45px;height:10px;line-height:10px;font-size:10.6px;font-weight:bold;font-family:&quot;Liberation Mono&quot;,monospace;color:#111;letter-spacing:.4px;text-align:center;filter:grayscale(1)">12</div>
<svg style="left:332.51px;top:60.51px" width="23.27" height="22.4" viewBox="0 0 16 15.4"><circle cx="7.9" cy="7.6" r="6.8" fill="#fff" stroke="#222" stroke-width="1.5"/><path d="M7.9 .8V14.4M1 7.6H14.8M2.4 3.9H13.4M2.4 11.3H13.4" stroke="#222" stroke-width="1.2"/><ellipse cx="7.9" cy="7.6" rx="3.5" ry="6.8" fill="none" stroke="#222" stroke-width="1.2"/></svg>
<svg style="left:362.76px;top:61.09px" width="25.6" height="20.95" viewBox="0 0 17.6 14.4"><circle cx="5.6" cy="5.8" r="2.9" fill="#f8cf52"/><path d="M5.6 .4V2.2M2.8 1L3.6 2.6M8.4 1L7.6 2.6M.8 3.2L2.4 4M.2 5.8H2M.8 8.6L2.4 7.6M2.6 10.8L3.6 9.2M10 2.6L8.8 3.6" stroke="#f5b92a" stroke-width="1.1"/><path d="M8 13.6H14.6A2.6 2.6 0 0 0 14.8 8.5 A3.7 3.7 0 0 0 7.8 7.9 A2.9 2.9 0 0 0 8 13.6z" fill="#f1f1f1" stroke="#858585" stroke-width="1"/><path d="M8 13H14.4" stroke="#b8b8b8" stroke-width="1"/></svg>
<svg style="left:393.31px;top:59.35px" width="25.6" height="25.6" viewBox="0 0 17.6 17.6"><g fill="none" stroke="#3f8f4f" stroke-linejoin="round"><path d="M8.7 17 L.6 7 L5.4 2 L8.7 4.6 L12 2 L16.8 7z" fill="#f4fcf2" stroke-width="1.2"/><path d="M2.4 8.6 L7 4 M15 8.6 L10.4 4" stroke-width="1"/><path d="M4.6 8 L7.4 6.4 L9.6 7.4 L13.2 11 M6.2 6.8 L9 9.8 M4.4 10.6 L8 14.6 M6 9.6 L9.4 13.4 M10.6 12.6 L12 11.6" stroke-width=".9"/><path d="M8.7 .2V2.4 M5.8 .8 L7 2.8 M11.6 .8 L10.4 2.8" stroke-width=".8"/></g></svg>
<div style="left:423.56px;top:58.47px;width:1.6px;height:25.31px;background:#9db59b"></div>
<div class="t" style="left:434.62px;top:71.56px;letter-spacing:-0.122px;">Betrieb</div>
<div style="left:471.71px;top:61.09px;width:373.38px;height:20.65px;border:1px solid #7a7a7a;background:#fff"></div>
<div class="t" style="left:475.49px;top:71.56px;letter-spacing:-0.055px;">{Demo-Unternehmen}</div>
<div style="left:826.91px;top:62.4px;width:17.02px;height:18.04px;background:#e6e6e6;border:1px solid #b3b3b3"></div>
<svg style="left:830.25px;top:68.07px" width="10.18" height="7.27" viewBox="0 0 7 5"><path d="M.6 .8 L3.5 3.8 L6.4 .8" fill="none" stroke="#444" stroke-width=".9"/></svg>
<div class="t" style="left:850.91px;top:71.56px;letter-spacing:-0.115px;">Mandant</div>
<div style="left:896px;top:61.09px;width:373.09px;height:20.65px;border:1px solid #7a7a7a;background:#fff"></div>
<div class="t" style="left:899.78px;top:71.56px;letter-spacing:-0.550px;">Öko GbR</div>
<div style="left:1250.91px;top:62.4px;width:17.02px;height:18.04px;background:#e6e6e6;border:1px solid #b3b3b3"></div>
<svg style="left:1254.25px;top:68.07px" width="10.18" height="7.27" viewBox="0 0 7 5"><path d="M.6 .8 L3.5 3.8 L6.4 .8" fill="none" stroke="#444" stroke-width=".9"/></svg>
<div class="t" style="left:1274.47px;top:72.44px;letter-spacing:.7px;font-weight:bold;font-size:12px">···</div>
<div class="t" style="left:1299.64px;top:71.56px;letter-spacing:-0.279px;">Datum</div>
<div style="left:1336.73px;top:61.09px;width:77.82px;height:20.65px;border:1px solid #7a7a7a;background:#f0f0f0"></div>
<div class="t" style="left:1341.09px;top:71.56px;letter-spacing:-0.023px;">10.11.2019</div>
<div class="t" style="left:1423.27px;top:71.56px;letter-spacing:0.041px;">Erntejahr</div>
<div style="left:1470.84px;top:61.09px;width:48.87px;height:20.65px;border:1px solid #7a7a7a;background:#fff"></div>
<div class="t" style="left:1474.62px;top:71.56px;letter-spacing:-0.117px;">2019</div>
<div style="left:1501.53px;top:62.4px;width:17.02px;height:18.04px;background:#e6e6e6;border:1px solid #b3b3b3"></div>
<svg style="left:1504.87px;top:68.07px" width="10.18" height="7.27" viewBox="0 0 7 5"><path d="M.6 .8 L3.5 3.8 L6.4 .8" fill="none" stroke="#444" stroke-width=".9"/></svg>
<svg style="left:1534.55px;top:61.09px" width="14.84" height="19.49" viewBox="0 0 10.2 13.4"><path d="M3.6 .3H6.3V3.4H9.7V6H6.3V9H3.6V6H.2V3.4H3.6z" fill="#8fae3c"/><rect x=".2" y="10.4" width="9.6" height="2.5" fill="#4a7cc0"/></svg>
<div style="left:1559.56px;top:58.47px;width:1.31px;height:25.31px;background:#9db59b"></div>
<svg style="left:1571.64px;top:60.22px" width="24.73" height="21.82" viewBox="0 0 17 15"><path d="M.8 .8V11.6L3.4 9.2L5.4 13.6L7.2 12.8L5.2 8.6H8.8z" fill="#fff" stroke="#111" stroke-width="1"/><text x="9" y="11.2" font-size="12.6" font-weight="bold" font-family="Liberation Sans, sans-serif" fill="#8fae3c">?</text></svg>
<svg style="left:10.18px;top:101.09px" width="19.78" height="21.24" viewBox="0 0 13.6 14.6"><g fill="none" stroke-linecap="round" stroke-linejoin="round"><path d="M3.8 11C1.2 9.6 1.2 4.4 4.4 3.8H7.4" stroke="#111" stroke-width="2"/><path d="M4.8 1.2 L8.2 3.8 L4.9 6.2" stroke="#111" stroke-width="1.9"/><path d="M10 3.2C12.6 4.6 12.6 10.4 9.4 11H6.4" stroke="#8fb43a" stroke-width="2"/><path d="M8.9 8.6 L5.5 11.1 L8.8 13.6" stroke="#8fb43a" stroke-width="1.9"/></g></svg>
<div class="t" style="left:34.91px;top:111.42px;letter-spacing:-0.152px;">Aktualisieren</div>
<svg style="left:110.84px;top:102.11px" width="18.33" height="18.04" viewBox="0 0 12.6 12.4"><path d="M.4 .4H10.6L12.2 2V12H.4z" fill="#6f6f6f"/><rect x="2.4" y=".4" width="7.4" height="5.2" fill="#fff"/><rect x="3.4" y="8" width="5.8" height="4" fill="#fff"/><rect x="6.6" y="8.8" width="1.6" height="2.6" fill="#6f6f6f"/></svg>
<div class="t" style="left:134.69px;top:111.42px;letter-spacing:-0.281px;color:#8d9c93">Speichern</div>
<svg style="left:196.36px;top:100.07px" width="19.49" height="20.95" viewBox="0 0 13.4 14.4"><path d="M.6 .6H8.8L12.6 4.4V13.8H.6z" fill="#f1f1f1" stroke="#a6a6a6" stroke-width=".9"/><path d="M8.8 .6V4.4H12.6" fill="none" stroke="#a6a6a6" stroke-width=".9"/><path d="M4 7 L8.8 11.6 M8.8 7 L4 11.6" stroke="#8e8e8e" stroke-width="1"/></svg>
<div class="t" style="left:220.51px;top:111.42px;letter-spacing:-0.309px;color:#8d9c93">Rückgängig</div>
<div style="left:285.82px;top:97.45px;width:1.31px;height:26.18px;background:#9db59b"></div>
<svg style="left:299.05px;top:100.22px" width="19.78" height="21.53" viewBox="0 0 13.6 14.8"><path d="M1.6 .8H9.4L12.8 4V13.8H1.6z" fill="#fff" stroke="#111" stroke-width="1.2"/><path d="M9.2 .8V4.2H12.8z" fill="#111"/><path d="M4.4 4.2H8M4.4 6.8H10.4M4.4 9.2H10.4M4.4 11.4H8.6" stroke="#9cbd4a" stroke-width=".9"/><path d="M.2 3.2H3M.2 6H3M.2 8.8H3M.2 11.6H3" stroke="#f0a024" stroke-width="1.3"/></svg>
<svg style="left:329.02px;top:100.95px" width="19.78" height="21.53" viewBox="0 0 13.6 14.8"><path d="M1.6 .8H9.4L12.8 4V13.8H1.6z" fill="#fff" stroke="#111" stroke-width="1.2"/><path d="M9.2 .8V4.2H12.8z" fill="#111"/><path d="M4.4 4.2H8M4.4 6.8H10.4M4.4 9.2H10.4M4.4 11.4H8.6" stroke="#9cbd4a" stroke-width=".9"/><path d="M.2 3.2H3M.2 6H3M.2 8.8H3M.2 11.6H3" stroke="#f0a024" stroke-width="1.3"/><path d="M3.4 3.6 L12.4 13 M12.4 3.6 L3.4 13" stroke="#111" stroke-width="2.6"/></svg>
<svg style="left:360.15px;top:99.78px" width="23.27" height="23.27" viewBox="0 0 16 16"><rect x=".8" y="2.6" width="5.6" height="5" fill="none" stroke="#555" stroke-width="1"/><path d="M1.6 3.6 L3.6 5.8 L8.4 .8" fill="none" stroke="#8fae3c" stroke-width="1.6"/><path d="M6.8 5.4H11.6V8.4" fill="none" stroke="#222" stroke-width=".9"/><path d="M10 7.8H13.2L11.6 9.8z" fill="#222"/><rect x="9" y="10.2" width="5.6" height="5.2" rx=".8" fill="#f2fbf0" stroke="#333" stroke-width="1"/></svg>
<div style="left:389.82px;top:97.45px;width:1.31px;height:26.18px;background:#9db59b"></div>
<svg style="left:398.84px;top:99.78px" width="21.82" height="21.24" viewBox="0 0 15 14.6"><rect x="4" y=".6" width="7" height="5.6" fill="#f6fbe8" stroke="#9cbd4a" stroke-width=".9"/><path d="M5.6 2.4H9.4M5.6 4H9.4" stroke="#9cbd4a" stroke-width=".7"/><rect x=".4" y="6" width="14.2" height="8" rx="1.6" fill="#111"/><rect x="2.4" y="10.4" width="10.2" height="2" fill="#fff"/><rect x="2.4" y="7.4" width="2" height="1" fill="#fff"/></svg>
<div class="t" style="left:424.73px;top:111.42px;letter-spacing:-0.280px;">Drucken</div>
<svg style="left:1578.91px;top:161.31px" width="11.64" height="11.64" viewBox="0 0 8 8"><path transform="translate(4 4)" d="M-2.0 1.25 L0 -1.25 L2.0 1.25" fill="none" stroke="#505050" stroke-width="1.35"/></svg>
<svg style="left:1578.91px;top:973.24px" width="11.64" height="11.64" viewBox="0 0 8 8"><path transform="translate(4 4)" d="M-2.0 -1.25 L0 1.25 L2.0 -1.25" fill="none" stroke="#505050" stroke-width="1.35"/></svg>
<svg style="left:536.29px;top:989.82px" width="11.64" height="11.64" viewBox="0 0 8 8"><path transform="translate(4 4)" d="M1.25 -2.0 L-1.25 0 L1.25 2.0" fill="none" stroke="#505050" stroke-width="1.35"/></svg>
<svg style="left:1562.18px;top:989.96px" width="11.64" height="11.64" viewBox="0 0 8 8"><path transform="translate(4 4)" d="M-1.25 -2.0 L1.25 0 L-1.25 2.0" fill="none" stroke="#505050" stroke-width="1.35"/></svg>
<svg style="left:8.58px;top:989.82px" width="11.64" height="11.64" viewBox="0 0 8 8"><path transform="translate(4 4)" d="M1.25 -2.0 L-1.25 0 L1.25 2.0" fill="none" stroke="#505050" stroke-width="1.35"/></svg>
<svg style="left:508.95px;top:989.82px" width="11.64" height="11.64" viewBox="0 0 8 8"><path transform="translate(4 4)" d="M-1.25 -2.0 L1.25 0 L-1.25 2.0" fill="none" stroke="#505050" stroke-width="1.35"/></svg>
<svg style="left:503.85px;top:1161.89px" width="14.55" height="13.67" viewBox="0 0 10 9.4"><rect x=".5" y=".5" width="8.8" height="7.6" fill="#fff" stroke="#222" stroke-width=".9"/><rect x=".2" y=".2" width="9.4" height="2" fill="#111"/><path d="M3.4 4.6H8.4M5.9 4.6V9" stroke="#555" stroke-width="1.1"/><path d="M4.4 4.4 L7.4 4.4 L7 6.4H4.8z" fill="#555"/></svg>
</div>
</body></html>
